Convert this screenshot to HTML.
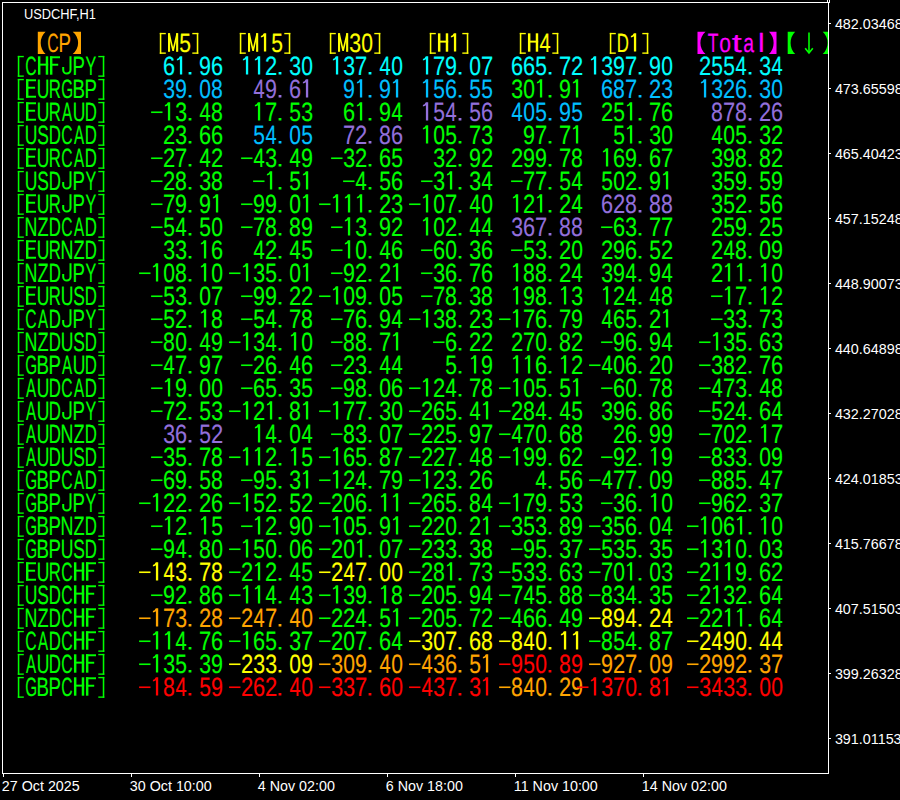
<!DOCTYPE html>
<html><head><meta charset="utf-8"><style>
html,body{margin:0;padding:0;background:#000;width:900px;height:800px;overflow:hidden}
svg{display:block}
text{font-family:"Liberation Sans",sans-serif;font-size:20px}
.tb text{stroke-width:0.12px;vector-effect:non-scaling-stroke}
.tb g:not(.ar)>rect,.tb g:not(.ar)>path:not(.sk){stroke:none}
.ax text{font-size:14px;fill:#fff}
</style></head><body>
<svg width="900" height="800" viewBox="0 0 900 800">
<rect width="900" height="800" fill="#000"/>
<defs><clipPath id="cl"><rect x="0" y="0" width="828" height="773"/></clipPath></defs>
<g clip-path="url(#cl)" class="tb">
<g fill="#FFA500">
<path d="M37.8 31.8H45.6A15.02 15.02 0 0 0 45.6 54H37.8Z"/>
</g>
<g fill="#FFA500" stroke="#FFA500">
<text transform="matrix(0.787 0 0.001 1.319 47.21 51.7)">C</text>
<text transform="matrix(0.935 0 0.001 1.319 58.5 51.7)">P</text>
</g>
<g fill="#FFA500">
<path d="M81 31.8H72.7A14.11 14.11 0 0 1 72.7 54H81Z"/>
</g>
<g fill="#FFFF00" stroke="#FFFF00">
<rect x="159.8" y="32.9" width="1.55" height="20.9"/>
<rect x="159.8" y="32.9" width="6" height="1.35"/>
<rect x="159.8" y="52.45" width="6" height="1.35"/>
<rect x="168" y="33.1" width="2.1" height="18.7"/>
<rect x="176.1" y="33.1" width="2.1" height="18.7"/>
<path class="sk" fill="none" stroke="#FFFF00" stroke-width="1.6" d="M169.1 33.6L173.1 50.7L177.1 33.6"/>
<text transform="matrix(1.053 0 0.001 1.319 179.16 51.7)">5</text>
<rect x="196.75" y="32.9" width="1.55" height="20.9"/>
<rect x="192.3" y="32.9" width="6" height="1.35"/>
<rect x="192.3" y="52.45" width="6" height="1.35"/>
</g>
<g fill="#FFFF00" stroke="#FFFF00">
<rect x="239.8" y="32.9" width="1.55" height="20.9"/>
<rect x="239.8" y="32.9" width="6" height="1.35"/>
<rect x="239.8" y="52.45" width="6" height="1.35"/>
<rect x="248" y="33.1" width="2.1" height="18.7"/>
<rect x="256.1" y="33.1" width="2.1" height="18.7"/>
<path class="sk" fill="none" stroke="#FFFF00" stroke-width="1.6" d="M249.1 33.6L253.1 50.7L257.1 33.6"/>
<path d="M263.9 33.3H266.2V51.5H263.9V36.3Q262.9 37.2 260.9 37.4V36Q262.6 35.8 263.9 33.3Z"/>
<text transform="matrix(1.053 0 0.001 1.319 271.16 51.7)">5</text>
<rect x="288.75" y="32.9" width="1.55" height="20.9"/>
<rect x="284.3" y="32.9" width="6" height="1.35"/>
<rect x="284.3" y="52.45" width="6" height="1.35"/>
</g>
<g fill="#FFFF00" stroke="#FFFF00">
<rect x="329.8" y="32.9" width="1.55" height="20.9"/>
<rect x="329.8" y="32.9" width="6" height="1.35"/>
<rect x="329.8" y="52.45" width="6" height="1.35"/>
<rect x="338" y="33.1" width="2.1" height="18.7"/>
<rect x="346.1" y="33.1" width="2.1" height="18.7"/>
<path class="sk" fill="none" stroke="#FFFF00" stroke-width="1.6" d="M339.1 33.6L343.1 50.7L347.1 33.6"/>
<text transform="matrix(1.064 0 0.001 1.319 349.15 51.7)">3</text>
<text transform="matrix(1.053 0 0.001 1.319 361.16 51.7)">0</text>
<rect x="378.75" y="32.9" width="1.55" height="20.9"/>
<rect x="374.3" y="32.9" width="6" height="1.35"/>
<rect x="374.3" y="52.45" width="6" height="1.35"/>
</g>
<g fill="#FFFF00" stroke="#FFFF00">
<rect x="429.8" y="32.9" width="1.55" height="20.9"/>
<rect x="429.8" y="32.9" width="6" height="1.35"/>
<rect x="429.8" y="52.45" width="6" height="1.35"/>
<rect x="437.95" y="33.3" width="2.45" height="18.4"/>
<rect x="445.75" y="33.3" width="2.45" height="18.4"/>
<rect x="438.05" y="40.65" width="10.1" height="1.95"/>
<path d="M453.9 33.3H456.2V51.5H453.9V36.3Q452.9 37.2 450.9 37.4V36Q452.6 35.8 453.9 33.3Z"/>
<rect x="466.75" y="32.9" width="1.55" height="20.9"/>
<rect x="462.3" y="32.9" width="6" height="1.35"/>
<rect x="462.3" y="52.45" width="6" height="1.35"/>
</g>
<g fill="#FFFF00" stroke="#FFFF00">
<rect x="519.8" y="32.9" width="1.55" height="20.9"/>
<rect x="519.8" y="32.9" width="6" height="1.35"/>
<rect x="519.8" y="52.45" width="6" height="1.35"/>
<rect x="527.95" y="33.3" width="2.45" height="18.4"/>
<rect x="535.75" y="33.3" width="2.45" height="18.4"/>
<rect x="528.05" y="40.65" width="10.1" height="1.95"/>
<text transform="matrix(1 0 0.001 1.319 539.5 51.7)">4</text>
<rect x="556.75" y="32.9" width="1.55" height="20.9"/>
<rect x="552.3" y="32.9" width="6" height="1.35"/>
<rect x="552.3" y="52.45" width="6" height="1.35"/>
</g>
<g fill="#FFFF00" stroke="#FFFF00">
<rect x="609.8" y="32.9" width="1.55" height="20.9"/>
<rect x="609.8" y="32.9" width="6" height="1.35"/>
<rect x="609.8" y="52.45" width="6" height="1.35"/>
<text transform="matrix(0.84 0 0.001 1.319 616.66 51.7)">D</text>
<path d="M633.9 33.3H636.2V51.5H633.9V36.3Q632.9 37.2 630.9 37.4V36Q632.6 35.8 633.9 33.3Z"/>
<rect x="646.75" y="32.9" width="1.55" height="20.9"/>
<rect x="642.3" y="32.9" width="6" height="1.35"/>
<rect x="642.3" y="52.45" width="6" height="1.35"/>
</g>
<g fill="#FF00FF">
<path d="M697.5 31.8H705.5A14.63 14.63 0 0 0 705.5 54H697.5Z"/>
<path d="M776.5 31.8H769A15.69 15.69 0 0 1 769 54H776.5Z"/>
</g>
<g fill="#FF00FF" stroke="#FF00FF">
<text transform="matrix(0.877 0 0.001 1.319 707.65 51.7)">T</text>
<text transform="matrix(1.053 0 0.001 1.319 719.16 51.7)">o</text>
<text transform="matrix(1.824 0 0.001 1.319 731.65 51.7)">t</text>
<text transform="matrix(0.971 0 0.001 1.319 743.22 51.7)">a</text>
<text transform="matrix(1.5 0 0.001 1.319 757.95 51.7)">l</text>
</g>
<g fill="#00FF00">
<path d="M787.7 31.8H795.2A15.69 15.69 0 0 0 795.2 54H787.7Z"/>
<path d="M830.5 31.8H822.7A15.02 15.02 0 0 1 822.7 54H830.5Z"/>
</g>
<g class="ar" stroke="#00FF00" stroke-width="1.6" fill="none"><path d="M809 32.5V53"/><path d="M805.2 48.2L809 53L812.8 48.2"/></g>
<g fill="#00FF00" stroke="#00FF00">
<rect x="17.8" y="55.9" width="1.55" height="20.9"/>
<rect x="17.8" y="55.9" width="6" height="1.35"/>
<rect x="17.8" y="75.45" width="6" height="1.35"/>
<text transform="matrix(0.787 0 0.001 1.319 25.21 74.7)">C</text>
<rect x="37.95" y="56.3" width="2.45" height="18.4"/>
<rect x="45.75" y="56.3" width="2.45" height="18.4"/>
<rect x="38.05" y="63.65" width="10.1" height="1.95"/>
<rect x="49.95" y="56.3" width="2.45" height="18.4"/>
<rect x="50" y="56.3" width="10" height="1.95"/>
<rect x="50" y="63.75" width="8.2" height="1.95"/>
<path class="sk" fill="none" stroke="#00FF00" stroke-width="2" d="M70.5 56.3V69.95A3.65 3.55 0 0 1 63.2 69.95V66.9"/>
<text transform="matrix(0.935 0 0.001 1.319 72.5 74.7)">P</text>
<text transform="matrix(0.806 0 0.001 1.319 85.6 74.7)">Y</text>
<rect x="102.75" y="55.9" width="1.55" height="20.9"/>
<rect x="98.3" y="55.9" width="6" height="1.35"/>
<rect x="98.3" y="75.45" width="6" height="1.35"/>
</g>
<g fill="#00FFFF" stroke="#00FFFF">
<text transform="matrix(1.087 0 0.001 1.319 162.91 74.7)">6</text>
<path d="M179.9 56.3H182.2V74.5H179.9V59.3Q178.9 60.2 176.9 60.4V59Q178.6 58.8 179.9 56.3Z"/>
<rect x="188.6" y="72" width="2.8" height="2.5"/>
<text transform="matrix(1.075 0 0.001 1.319 199.03 74.7)">9</text>
<text transform="matrix(1.087 0 0.001 1.319 210.91 74.7)">6</text>
</g>
<g fill="#00FFFF" stroke="#00FFFF">
<path d="M245.9 56.3H248.2V74.5H245.9V59.3Q244.9 60.2 242.9 60.4V59Q244.6 58.8 245.9 56.3Z"/>
<path d="M257.9 56.3H260.2V74.5H257.9V59.3Q256.9 60.2 254.9 60.4V59Q256.6 58.8 257.9 56.3Z"/>
<text transform="matrix(1.099 0 0.001 1.319 264.9 74.7)">2</text>
<rect x="278.6" y="72" width="2.8" height="2.5"/>
<text transform="matrix(1.064 0 0.001 1.319 289.15 74.7)">3</text>
<text transform="matrix(1.053 0 0.001 1.319 301.16 74.7)">0</text>
</g>
<g fill="#00FFFF" stroke="#00FFFF">
<path d="M335.9 56.3H338.2V74.5H335.9V59.3Q334.9 60.2 332.9 60.4V59Q334.6 58.8 335.9 56.3Z"/>
<text transform="matrix(1.064 0 0.001 1.319 343.15 74.7)">3</text>
<text transform="matrix(1.099 0 0.001 1.319 354.9 74.7)">7</text>
<rect x="368.6" y="72" width="2.8" height="2.5"/>
<text transform="matrix(1 0 0.001 1.319 379.5 74.7)">4</text>
<text transform="matrix(1.053 0 0.001 1.319 391.16 74.7)">0</text>
</g>
<g fill="#00FFFF" stroke="#00FFFF">
<path d="M425.9 56.3H428.2V74.5H425.9V59.3Q424.9 60.2 422.9 60.4V59Q424.6 58.8 425.9 56.3Z"/>
<text transform="matrix(1.099 0 0.001 1.319 432.9 74.7)">7</text>
<text transform="matrix(1.075 0 0.001 1.319 445.03 74.7)">9</text>
<rect x="458.6" y="72" width="2.8" height="2.5"/>
<text transform="matrix(1.053 0 0.001 1.319 469.16 74.7)">0</text>
<text transform="matrix(1.099 0 0.001 1.319 480.9 74.7)">7</text>
</g>
<g fill="#00FFFF" stroke="#00FFFF">
<text transform="matrix(1.087 0 0.001 1.319 510.91 74.7)">6</text>
<text transform="matrix(1.087 0 0.001 1.319 522.91 74.7)">6</text>
<text transform="matrix(1.053 0 0.001 1.319 535.16 74.7)">5</text>
<rect x="548.6" y="72" width="2.8" height="2.5"/>
<text transform="matrix(1.099 0 0.001 1.319 558.9 74.7)">7</text>
<text transform="matrix(1.099 0 0.001 1.319 570.9 74.7)">2</text>
</g>
<g fill="#00FFFF" stroke="#00FFFF">
<path d="M593.9 56.3H596.2V74.5H593.9V59.3Q592.9 60.2 590.9 60.4V59Q592.6 58.8 593.9 56.3Z"/>
<text transform="matrix(1.064 0 0.001 1.319 601.15 74.7)">3</text>
<text transform="matrix(1.075 0 0.001 1.319 613.03 74.7)">9</text>
<text transform="matrix(1.099 0 0.001 1.319 624.9 74.7)">7</text>
<rect x="638.6" y="72" width="2.8" height="2.5"/>
<text transform="matrix(1.075 0 0.001 1.319 649.03 74.7)">9</text>
<text transform="matrix(1.053 0 0.001 1.319 661.16 74.7)">0</text>
</g>
<g fill="#00FFFF" stroke="#00FFFF">
<text transform="matrix(1.099 0 0.001 1.319 698.9 74.7)">2</text>
<text transform="matrix(1.053 0 0.001 1.319 711.16 74.7)">5</text>
<text transform="matrix(1.053 0 0.001 1.319 723.16 74.7)">5</text>
<text transform="matrix(1 0 0.001 1.319 735.5 74.7)">4</text>
<rect x="748.6" y="72" width="2.8" height="2.5"/>
<text transform="matrix(1.064 0 0.001 1.319 759.15 74.7)">3</text>
<text transform="matrix(1 0 0.001 1.319 771.5 74.7)">4</text>
</g>
<g fill="#00FF00" stroke="#00FF00">
<rect x="17.8" y="78.9" width="1.55" height="20.9"/>
<rect x="17.8" y="78.9" width="6" height="1.35"/>
<rect x="17.8" y="98.45" width="6" height="1.35"/>
<rect x="26" y="79.3" width="2.4" height="18.4"/>
<rect x="26.1" y="79.3" width="9.9" height="1.95"/>
<rect x="26.1" y="86.75" width="9" height="1.95"/>
<rect x="26.1" y="95.75" width="9.9" height="1.95"/>
<text transform="matrix(0.877 0 0.001 1.319 36.68 97.7)">U</text>
<text transform="matrix(0.84 0 0.001 1.319 48.66 97.7)">R</text>
<text transform="matrix(0.763 0 0.001 1.319 61.24 97.7)">G</text>
<text transform="matrix(0.935 0 0.001 1.319 72.5 97.7)">B</text>
<text transform="matrix(0.935 0 0.001 1.319 84.5 97.7)">P</text>
<rect x="102.75" y="78.9" width="1.55" height="20.9"/>
<rect x="98.3" y="78.9" width="6" height="1.35"/>
<rect x="98.3" y="98.45" width="6" height="1.35"/>
</g>
<g fill="#00BFFF" stroke="#00BFFF">
<text transform="matrix(1.064 0 0.001 1.319 163.15 97.7)">3</text>
<text transform="matrix(1.075 0 0.001 1.319 175.03 97.7)">9</text>
<rect x="188.6" y="95" width="2.8" height="2.5"/>
<text transform="matrix(1.053 0 0.001 1.319 199.16 97.7)">0</text>
<text transform="matrix(1.064 0 0.001 1.319 211.04 97.7)">8</text>
</g>
<g fill="#9370DB" stroke="#9370DB">
<text transform="matrix(1 0 0.001 1.319 253.5 97.7)">4</text>
<text transform="matrix(1.075 0 0.001 1.319 265.03 97.7)">9</text>
<rect x="278.6" y="95" width="2.8" height="2.5"/>
<text transform="matrix(1.087 0 0.001 1.319 288.91 97.7)">6</text>
<path d="M305.9 79.3H308.2V97.5H305.9V82.3Q304.9 83.2 302.9 83.4V82Q304.6 81.8 305.9 79.3Z"/>
</g>
<g fill="#00BFFF" stroke="#00BFFF">
<text transform="matrix(1.075 0 0.001 1.319 343.03 97.7)">9</text>
<path d="M359.9 79.3H362.2V97.5H359.9V82.3Q358.9 83.2 356.9 83.4V82Q358.6 81.8 359.9 79.3Z"/>
<rect x="368.6" y="95" width="2.8" height="2.5"/>
<text transform="matrix(1.075 0 0.001 1.319 379.03 97.7)">9</text>
<path d="M395.9 79.3H398.2V97.5H395.9V82.3Q394.9 83.2 392.9 83.4V82Q394.6 81.8 395.9 79.3Z"/>
</g>
<g fill="#00BFFF" stroke="#00BFFF">
<path d="M425.9 79.3H428.2V97.5H425.9V82.3Q424.9 83.2 422.9 83.4V82Q424.6 81.8 425.9 79.3Z"/>
<text transform="matrix(1.053 0 0.001 1.319 433.16 97.7)">5</text>
<text transform="matrix(1.087 0 0.001 1.319 444.91 97.7)">6</text>
<rect x="458.6" y="95" width="2.8" height="2.5"/>
<text transform="matrix(1.053 0 0.001 1.319 469.16 97.7)">5</text>
<text transform="matrix(1.053 0 0.001 1.319 481.16 97.7)">5</text>
</g>
<g fill="#00FF00" stroke="#00FF00">
<text transform="matrix(1.064 0 0.001 1.319 511.15 97.7)">3</text>
<text transform="matrix(1.053 0 0.001 1.319 523.16 97.7)">0</text>
<path d="M539.9 79.3H542.2V97.5H539.9V82.3Q538.9 83.2 536.9 83.4V82Q538.6 81.8 539.9 79.3Z"/>
<rect x="548.6" y="95" width="2.8" height="2.5"/>
<text transform="matrix(1.075 0 0.001 1.319 559.03 97.7)">9</text>
<path d="M575.9 79.3H578.2V97.5H575.9V82.3Q574.9 83.2 572.9 83.4V82Q574.6 81.8 575.9 79.3Z"/>
</g>
<g fill="#00BFFF" stroke="#00BFFF">
<text transform="matrix(1.087 0 0.001 1.319 600.91 97.7)">6</text>
<text transform="matrix(1.064 0 0.001 1.319 613.04 97.7)">8</text>
<text transform="matrix(1.099 0 0.001 1.319 624.9 97.7)">7</text>
<rect x="638.6" y="95" width="2.8" height="2.5"/>
<text transform="matrix(1.099 0 0.001 1.319 648.9 97.7)">2</text>
<text transform="matrix(1.064 0 0.001 1.319 661.15 97.7)">3</text>
</g>
<g fill="#00BFFF" stroke="#00BFFF">
<path d="M703.9 79.3H706.2V97.5H703.9V82.3Q702.9 83.2 700.9 83.4V82Q702.6 81.8 703.9 79.3Z"/>
<text transform="matrix(1.064 0 0.001 1.319 711.15 97.7)">3</text>
<text transform="matrix(1.099 0 0.001 1.319 722.9 97.7)">2</text>
<text transform="matrix(1.087 0 0.001 1.319 734.91 97.7)">6</text>
<rect x="748.6" y="95" width="2.8" height="2.5"/>
<text transform="matrix(1.064 0 0.001 1.319 759.15 97.7)">3</text>
<text transform="matrix(1.053 0 0.001 1.319 771.16 97.7)">0</text>
</g>
<g fill="#00FF00" stroke="#00FF00">
<rect x="17.8" y="101.9" width="1.55" height="20.9"/>
<rect x="17.8" y="101.9" width="6" height="1.35"/>
<rect x="17.8" y="121.45" width="6" height="1.35"/>
<rect x="26" y="102.3" width="2.4" height="18.4"/>
<rect x="26.1" y="102.3" width="9.9" height="1.95"/>
<rect x="26.1" y="109.75" width="9" height="1.95"/>
<rect x="26.1" y="118.75" width="9.9" height="1.95"/>
<text transform="matrix(0.877 0 0.001 1.319 36.68 120.7)">U</text>
<text transform="matrix(0.84 0 0.001 1.319 48.66 120.7)">R</text>
<text transform="matrix(0.758 0 0.001 1.319 61.92 120.7)">A</text>
<text transform="matrix(0.877 0 0.001 1.319 72.68 120.7)">U</text>
<text transform="matrix(0.84 0 0.001 1.319 84.66 120.7)">D</text>
<rect x="102.75" y="101.9" width="1.55" height="20.9"/>
<rect x="98.3" y="101.9" width="6" height="1.35"/>
<rect x="98.3" y="121.45" width="6" height="1.35"/>
</g>
<g fill="#00FF00" stroke="#00FF00">
<rect x="151.1" y="111.45" width="11.4" height="1.6"/>
<path d="M167.9 102.3H170.2V120.5H167.9V105.3Q166.9 106.2 164.9 106.4V105Q166.6 104.8 167.9 102.3Z"/>
<text transform="matrix(1.064 0 0.001 1.319 175.15 120.7)">3</text>
<rect x="188.6" y="118" width="2.8" height="2.5"/>
<text transform="matrix(1 0 0.001 1.319 199.5 120.7)">4</text>
<text transform="matrix(1.064 0 0.001 1.319 211.04 120.7)">8</text>
</g>
<g fill="#00FF00" stroke="#00FF00">
<path d="M257.9 102.3H260.2V120.5H257.9V105.3Q256.9 106.2 254.9 106.4V105Q256.6 104.8 257.9 102.3Z"/>
<text transform="matrix(1.099 0 0.001 1.319 264.9 120.7)">7</text>
<rect x="278.6" y="118" width="2.8" height="2.5"/>
<text transform="matrix(1.053 0 0.001 1.319 289.16 120.7)">5</text>
<text transform="matrix(1.064 0 0.001 1.319 301.15 120.7)">3</text>
</g>
<g fill="#00FF00" stroke="#00FF00">
<text transform="matrix(1.087 0 0.001 1.319 342.91 120.7)">6</text>
<path d="M359.9 102.3H362.2V120.5H359.9V105.3Q358.9 106.2 356.9 106.4V105Q358.6 104.8 359.9 102.3Z"/>
<rect x="368.6" y="118" width="2.8" height="2.5"/>
<text transform="matrix(1.075 0 0.001 1.319 379.03 120.7)">9</text>
<text transform="matrix(1 0 0.001 1.319 391.5 120.7)">4</text>
</g>
<g fill="#9370DB" stroke="#9370DB">
<path d="M425.9 102.3H428.2V120.5H425.9V105.3Q424.9 106.2 422.9 106.4V105Q424.6 104.8 425.9 102.3Z"/>
<text transform="matrix(1.053 0 0.001 1.319 433.16 120.7)">5</text>
<text transform="matrix(1 0 0.001 1.319 445.5 120.7)">4</text>
<rect x="458.6" y="118" width="2.8" height="2.5"/>
<text transform="matrix(1.053 0 0.001 1.319 469.16 120.7)">5</text>
<text transform="matrix(1.087 0 0.001 1.319 480.91 120.7)">6</text>
</g>
<g fill="#00BFFF" stroke="#00BFFF">
<text transform="matrix(1 0 0.001 1.319 511.5 120.7)">4</text>
<text transform="matrix(1.053 0 0.001 1.319 523.16 120.7)">0</text>
<text transform="matrix(1.053 0 0.001 1.319 535.16 120.7)">5</text>
<rect x="548.6" y="118" width="2.8" height="2.5"/>
<text transform="matrix(1.075 0 0.001 1.319 559.03 120.7)">9</text>
<text transform="matrix(1.053 0 0.001 1.319 571.16 120.7)">5</text>
</g>
<g fill="#00FF00" stroke="#00FF00">
<text transform="matrix(1.099 0 0.001 1.319 600.9 120.7)">2</text>
<text transform="matrix(1.053 0 0.001 1.319 613.16 120.7)">5</text>
<path d="M629.9 102.3H632.2V120.5H629.9V105.3Q628.9 106.2 626.9 106.4V105Q628.6 104.8 629.9 102.3Z"/>
<rect x="638.6" y="118" width="2.8" height="2.5"/>
<text transform="matrix(1.099 0 0.001 1.319 648.9 120.7)">7</text>
<text transform="matrix(1.087 0 0.001 1.319 660.91 120.7)">6</text>
</g>
<g fill="#9370DB" stroke="#9370DB">
<text transform="matrix(1.064 0 0.001 1.319 711.04 120.7)">8</text>
<text transform="matrix(1.099 0 0.001 1.319 722.9 120.7)">7</text>
<text transform="matrix(1.064 0 0.001 1.319 735.04 120.7)">8</text>
<rect x="748.6" y="118" width="2.8" height="2.5"/>
<text transform="matrix(1.099 0 0.001 1.319 758.9 120.7)">2</text>
<text transform="matrix(1.087 0 0.001 1.319 770.91 120.7)">6</text>
</g>
<g fill="#00FF00" stroke="#00FF00">
<rect x="17.8" y="124.9" width="1.55" height="20.9"/>
<rect x="17.8" y="124.9" width="6" height="1.35"/>
<rect x="17.8" y="144.45" width="6" height="1.35"/>
<text transform="matrix(0.877 0 0.001 1.319 24.68 143.7)">U</text>
<text transform="matrix(0.87 0 0.001 1.319 37.22 143.7)">S</text>
<text transform="matrix(0.84 0 0.001 1.319 48.66 143.7)">D</text>
<text transform="matrix(0.787 0 0.001 1.319 61.21 143.7)">C</text>
<text transform="matrix(0.758 0 0.001 1.319 73.92 143.7)">A</text>
<text transform="matrix(0.84 0 0.001 1.319 84.66 143.7)">D</text>
<rect x="102.75" y="124.9" width="1.55" height="20.9"/>
<rect x="98.3" y="124.9" width="6" height="1.35"/>
<rect x="98.3" y="144.45" width="6" height="1.35"/>
</g>
<g fill="#00FF00" stroke="#00FF00">
<text transform="matrix(1.099 0 0.001 1.319 162.9 143.7)">2</text>
<text transform="matrix(1.064 0 0.001 1.319 175.15 143.7)">3</text>
<rect x="188.6" y="141" width="2.8" height="2.5"/>
<text transform="matrix(1.087 0 0.001 1.319 198.91 143.7)">6</text>
<text transform="matrix(1.087 0 0.001 1.319 210.91 143.7)">6</text>
</g>
<g fill="#00BFFF" stroke="#00BFFF">
<text transform="matrix(1.053 0 0.001 1.319 253.16 143.7)">5</text>
<text transform="matrix(1 0 0.001 1.319 265.5 143.7)">4</text>
<rect x="278.6" y="141" width="2.8" height="2.5"/>
<text transform="matrix(1.053 0 0.001 1.319 289.16 143.7)">0</text>
<text transform="matrix(1.053 0 0.001 1.319 301.16 143.7)">5</text>
</g>
<g fill="#9370DB" stroke="#9370DB">
<text transform="matrix(1.099 0 0.001 1.319 342.9 143.7)">7</text>
<text transform="matrix(1.099 0 0.001 1.319 354.9 143.7)">2</text>
<rect x="368.6" y="141" width="2.8" height="2.5"/>
<text transform="matrix(1.064 0 0.001 1.319 379.04 143.7)">8</text>
<text transform="matrix(1.087 0 0.001 1.319 390.91 143.7)">6</text>
</g>
<g fill="#00FF00" stroke="#00FF00">
<path d="M425.9 125.3H428.2V143.5H425.9V128.3Q424.9 129.2 422.9 129.4V128Q424.6 127.8 425.9 125.3Z"/>
<text transform="matrix(1.053 0 0.001 1.319 433.16 143.7)">0</text>
<text transform="matrix(1.053 0 0.001 1.319 445.16 143.7)">5</text>
<rect x="458.6" y="141" width="2.8" height="2.5"/>
<text transform="matrix(1.099 0 0.001 1.319 468.9 143.7)">7</text>
<text transform="matrix(1.064 0 0.001 1.319 481.15 143.7)">3</text>
</g>
<g fill="#00FF00" stroke="#00FF00">
<text transform="matrix(1.075 0 0.001 1.319 523.03 143.7)">9</text>
<text transform="matrix(1.099 0 0.001 1.319 534.9 143.7)">7</text>
<rect x="548.6" y="141" width="2.8" height="2.5"/>
<text transform="matrix(1.099 0 0.001 1.319 558.9 143.7)">7</text>
<path d="M575.9 125.3H578.2V143.5H575.9V128.3Q574.9 129.2 572.9 129.4V128Q574.6 127.8 575.9 125.3Z"/>
</g>
<g fill="#00FF00" stroke="#00FF00">
<text transform="matrix(1.053 0 0.001 1.319 613.16 143.7)">5</text>
<path d="M629.9 125.3H632.2V143.5H629.9V128.3Q628.9 129.2 626.9 129.4V128Q628.6 127.8 629.9 125.3Z"/>
<rect x="638.6" y="141" width="2.8" height="2.5"/>
<text transform="matrix(1.064 0 0.001 1.319 649.15 143.7)">3</text>
<text transform="matrix(1.053 0 0.001 1.319 661.16 143.7)">0</text>
</g>
<g fill="#00FF00" stroke="#00FF00">
<text transform="matrix(1 0 0.001 1.319 711.5 143.7)">4</text>
<text transform="matrix(1.053 0 0.001 1.319 723.16 143.7)">0</text>
<text transform="matrix(1.053 0 0.001 1.319 735.16 143.7)">5</text>
<rect x="748.6" y="141" width="2.8" height="2.5"/>
<text transform="matrix(1.064 0 0.001 1.319 759.15 143.7)">3</text>
<text transform="matrix(1.099 0 0.001 1.319 770.9 143.7)">2</text>
</g>
<g fill="#00FF00" stroke="#00FF00">
<rect x="17.8" y="147.9" width="1.55" height="20.9"/>
<rect x="17.8" y="147.9" width="6" height="1.35"/>
<rect x="17.8" y="167.45" width="6" height="1.35"/>
<rect x="26" y="148.3" width="2.4" height="18.4"/>
<rect x="26.1" y="148.3" width="9.9" height="1.95"/>
<rect x="26.1" y="155.75" width="9" height="1.95"/>
<rect x="26.1" y="164.75" width="9.9" height="1.95"/>
<text transform="matrix(0.877 0 0.001 1.319 36.68 166.7)">U</text>
<text transform="matrix(0.84 0 0.001 1.319 48.66 166.7)">R</text>
<text transform="matrix(0.787 0 0.001 1.319 61.21 166.7)">C</text>
<text transform="matrix(0.758 0 0.001 1.319 73.92 166.7)">A</text>
<text transform="matrix(0.84 0 0.001 1.319 84.66 166.7)">D</text>
<rect x="102.75" y="147.9" width="1.55" height="20.9"/>
<rect x="98.3" y="147.9" width="6" height="1.35"/>
<rect x="98.3" y="167.45" width="6" height="1.35"/>
</g>
<g fill="#00FF00" stroke="#00FF00">
<rect x="151.1" y="157.45" width="11.4" height="1.6"/>
<text transform="matrix(1.099 0 0.001 1.319 162.9 166.7)">2</text>
<text transform="matrix(1.099 0 0.001 1.319 174.9 166.7)">7</text>
<rect x="188.6" y="164" width="2.8" height="2.5"/>
<text transform="matrix(1 0 0.001 1.319 199.5 166.7)">4</text>
<text transform="matrix(1.099 0 0.001 1.319 210.9 166.7)">2</text>
</g>
<g fill="#00FF00" stroke="#00FF00">
<rect x="241.1" y="157.45" width="11.4" height="1.6"/>
<text transform="matrix(1 0 0.001 1.319 253.5 166.7)">4</text>
<text transform="matrix(1.064 0 0.001 1.319 265.15 166.7)">3</text>
<rect x="278.6" y="164" width="2.8" height="2.5"/>
<text transform="matrix(1 0 0.001 1.319 289.5 166.7)">4</text>
<text transform="matrix(1.075 0 0.001 1.319 301.03 166.7)">9</text>
</g>
<g fill="#00FF00" stroke="#00FF00">
<rect x="331.1" y="157.45" width="11.4" height="1.6"/>
<text transform="matrix(1.064 0 0.001 1.319 343.15 166.7)">3</text>
<text transform="matrix(1.099 0 0.001 1.319 354.9 166.7)">2</text>
<rect x="368.6" y="164" width="2.8" height="2.5"/>
<text transform="matrix(1.087 0 0.001 1.319 378.91 166.7)">6</text>
<text transform="matrix(1.053 0 0.001 1.319 391.16 166.7)">5</text>
</g>
<g fill="#00FF00" stroke="#00FF00">
<text transform="matrix(1.064 0 0.001 1.319 433.15 166.7)">3</text>
<text transform="matrix(1.099 0 0.001 1.319 444.9 166.7)">2</text>
<rect x="458.6" y="164" width="2.8" height="2.5"/>
<text transform="matrix(1.075 0 0.001 1.319 469.03 166.7)">9</text>
<text transform="matrix(1.099 0 0.001 1.319 480.9 166.7)">2</text>
</g>
<g fill="#00FF00" stroke="#00FF00">
<text transform="matrix(1.099 0 0.001 1.319 510.9 166.7)">2</text>
<text transform="matrix(1.075 0 0.001 1.319 523.03 166.7)">9</text>
<text transform="matrix(1.075 0 0.001 1.319 535.03 166.7)">9</text>
<rect x="548.6" y="164" width="2.8" height="2.5"/>
<text transform="matrix(1.099 0 0.001 1.319 558.9 166.7)">7</text>
<text transform="matrix(1.064 0 0.001 1.319 571.04 166.7)">8</text>
</g>
<g fill="#00FF00" stroke="#00FF00">
<path d="M605.9 148.3H608.2V166.5H605.9V151.3Q604.9 152.2 602.9 152.4V151Q604.6 150.8 605.9 148.3Z"/>
<text transform="matrix(1.087 0 0.001 1.319 612.91 166.7)">6</text>
<text transform="matrix(1.075 0 0.001 1.319 625.03 166.7)">9</text>
<rect x="638.6" y="164" width="2.8" height="2.5"/>
<text transform="matrix(1.087 0 0.001 1.319 648.91 166.7)">6</text>
<text transform="matrix(1.099 0 0.001 1.319 660.9 166.7)">7</text>
</g>
<g fill="#00FF00" stroke="#00FF00">
<text transform="matrix(1.064 0 0.001 1.319 711.15 166.7)">3</text>
<text transform="matrix(1.075 0 0.001 1.319 723.03 166.7)">9</text>
<text transform="matrix(1.064 0 0.001 1.319 735.04 166.7)">8</text>
<rect x="748.6" y="164" width="2.8" height="2.5"/>
<text transform="matrix(1.064 0 0.001 1.319 759.04 166.7)">8</text>
<text transform="matrix(1.099 0 0.001 1.319 770.9 166.7)">2</text>
</g>
<g fill="#00FF00" stroke="#00FF00">
<rect x="17.8" y="170.9" width="1.55" height="20.9"/>
<rect x="17.8" y="170.9" width="6" height="1.35"/>
<rect x="17.8" y="190.45" width="6" height="1.35"/>
<text transform="matrix(0.877 0 0.001 1.319 24.68 189.7)">U</text>
<text transform="matrix(0.87 0 0.001 1.319 37.22 189.7)">S</text>
<text transform="matrix(0.84 0 0.001 1.319 48.66 189.7)">D</text>
<path class="sk" fill="none" stroke="#00FF00" stroke-width="2" d="M70.5 171.3V184.95A3.65 3.55 0 0 1 63.2 184.95V181.9"/>
<text transform="matrix(0.935 0 0.001 1.319 72.5 189.7)">P</text>
<text transform="matrix(0.806 0 0.001 1.319 85.6 189.7)">Y</text>
<rect x="102.75" y="170.9" width="1.55" height="20.9"/>
<rect x="98.3" y="170.9" width="6" height="1.35"/>
<rect x="98.3" y="190.45" width="6" height="1.35"/>
</g>
<g fill="#00FF00" stroke="#00FF00">
<rect x="151.1" y="180.45" width="11.4" height="1.6"/>
<text transform="matrix(1.099 0 0.001 1.319 162.9 189.7)">2</text>
<text transform="matrix(1.064 0 0.001 1.319 175.04 189.7)">8</text>
<rect x="188.6" y="187" width="2.8" height="2.5"/>
<text transform="matrix(1.064 0 0.001 1.319 199.15 189.7)">3</text>
<text transform="matrix(1.064 0 0.001 1.319 211.04 189.7)">8</text>
</g>
<g fill="#00FF00" stroke="#00FF00">
<rect x="253.1" y="180.45" width="11.4" height="1.6"/>
<path d="M269.9 171.3H272.2V189.5H269.9V174.3Q268.9 175.2 266.9 175.4V174Q268.6 173.8 269.9 171.3Z"/>
<rect x="278.6" y="187" width="2.8" height="2.5"/>
<text transform="matrix(1.053 0 0.001 1.319 289.16 189.7)">5</text>
<path d="M305.9 171.3H308.2V189.5H305.9V174.3Q304.9 175.2 302.9 175.4V174Q304.6 173.8 305.9 171.3Z"/>
</g>
<g fill="#00FF00" stroke="#00FF00">
<rect x="343.1" y="180.45" width="11.4" height="1.6"/>
<text transform="matrix(1 0 0.001 1.319 355.5 189.7)">4</text>
<rect x="368.6" y="187" width="2.8" height="2.5"/>
<text transform="matrix(1.053 0 0.001 1.319 379.16 189.7)">5</text>
<text transform="matrix(1.087 0 0.001 1.319 390.91 189.7)">6</text>
</g>
<g fill="#00FF00" stroke="#00FF00">
<rect x="421.1" y="180.45" width="11.4" height="1.6"/>
<text transform="matrix(1.064 0 0.001 1.319 433.15 189.7)">3</text>
<path d="M449.9 171.3H452.2V189.5H449.9V174.3Q448.9 175.2 446.9 175.4V174Q448.6 173.8 449.9 171.3Z"/>
<rect x="458.6" y="187" width="2.8" height="2.5"/>
<text transform="matrix(1.064 0 0.001 1.319 469.15 189.7)">3</text>
<text transform="matrix(1 0 0.001 1.319 481.5 189.7)">4</text>
</g>
<g fill="#00FF00" stroke="#00FF00">
<rect x="511.1" y="180.45" width="11.4" height="1.6"/>
<text transform="matrix(1.099 0 0.001 1.319 522.9 189.7)">7</text>
<text transform="matrix(1.099 0 0.001 1.319 534.9 189.7)">7</text>
<rect x="548.6" y="187" width="2.8" height="2.5"/>
<text transform="matrix(1.053 0 0.001 1.319 559.16 189.7)">5</text>
<text transform="matrix(1 0 0.001 1.319 571.5 189.7)">4</text>
</g>
<g fill="#00FF00" stroke="#00FF00">
<text transform="matrix(1.053 0 0.001 1.319 601.16 189.7)">5</text>
<text transform="matrix(1.053 0 0.001 1.319 613.16 189.7)">0</text>
<text transform="matrix(1.099 0 0.001 1.319 624.9 189.7)">2</text>
<rect x="638.6" y="187" width="2.8" height="2.5"/>
<text transform="matrix(1.075 0 0.001 1.319 649.03 189.7)">9</text>
<path d="M665.9 171.3H668.2V189.5H665.9V174.3Q664.9 175.2 662.9 175.4V174Q664.6 173.8 665.9 171.3Z"/>
</g>
<g fill="#00FF00" stroke="#00FF00">
<text transform="matrix(1.064 0 0.001 1.319 711.15 189.7)">3</text>
<text transform="matrix(1.053 0 0.001 1.319 723.16 189.7)">5</text>
<text transform="matrix(1.075 0 0.001 1.319 735.03 189.7)">9</text>
<rect x="748.6" y="187" width="2.8" height="2.5"/>
<text transform="matrix(1.053 0 0.001 1.319 759.16 189.7)">5</text>
<text transform="matrix(1.075 0 0.001 1.319 771.03 189.7)">9</text>
</g>
<g fill="#00FF00" stroke="#00FF00">
<rect x="17.8" y="193.9" width="1.55" height="20.9"/>
<rect x="17.8" y="193.9" width="6" height="1.35"/>
<rect x="17.8" y="213.45" width="6" height="1.35"/>
<rect x="26" y="194.3" width="2.4" height="18.4"/>
<rect x="26.1" y="194.3" width="9.9" height="1.95"/>
<rect x="26.1" y="201.75" width="9" height="1.95"/>
<rect x="26.1" y="210.75" width="9.9" height="1.95"/>
<text transform="matrix(0.877 0 0.001 1.319 36.68 212.7)">U</text>
<text transform="matrix(0.84 0 0.001 1.319 48.66 212.7)">R</text>
<path class="sk" fill="none" stroke="#00FF00" stroke-width="2" d="M70.5 194.3V207.95A3.65 3.55 0 0 1 63.2 207.95V204.9"/>
<text transform="matrix(0.935 0 0.001 1.319 72.5 212.7)">P</text>
<text transform="matrix(0.806 0 0.001 1.319 85.6 212.7)">Y</text>
<rect x="102.75" y="193.9" width="1.55" height="20.9"/>
<rect x="98.3" y="193.9" width="6" height="1.35"/>
<rect x="98.3" y="213.45" width="6" height="1.35"/>
</g>
<g fill="#00FF00" stroke="#00FF00">
<rect x="151.1" y="203.45" width="11.4" height="1.6"/>
<text transform="matrix(1.099 0 0.001 1.319 162.9 212.7)">7</text>
<text transform="matrix(1.075 0 0.001 1.319 175.03 212.7)">9</text>
<rect x="188.6" y="210" width="2.8" height="2.5"/>
<text transform="matrix(1.075 0 0.001 1.319 199.03 212.7)">9</text>
<path d="M215.9 194.3H218.2V212.5H215.9V197.3Q214.9 198.2 212.9 198.4V197Q214.6 196.8 215.9 194.3Z"/>
</g>
<g fill="#00FF00" stroke="#00FF00">
<rect x="241.1" y="203.45" width="11.4" height="1.6"/>
<text transform="matrix(1.075 0 0.001 1.319 253.03 212.7)">9</text>
<text transform="matrix(1.075 0 0.001 1.319 265.03 212.7)">9</text>
<rect x="278.6" y="210" width="2.8" height="2.5"/>
<text transform="matrix(1.053 0 0.001 1.319 289.16 212.7)">0</text>
<path d="M305.9 194.3H308.2V212.5H305.9V197.3Q304.9 198.2 302.9 198.4V197Q304.6 196.8 305.9 194.3Z"/>
</g>
<g fill="#00FF00" stroke="#00FF00">
<rect x="319.1" y="203.45" width="11.4" height="1.6"/>
<path d="M335.9 194.3H338.2V212.5H335.9V197.3Q334.9 198.2 332.9 198.4V197Q334.6 196.8 335.9 194.3Z"/>
<path d="M347.9 194.3H350.2V212.5H347.9V197.3Q346.9 198.2 344.9 198.4V197Q346.6 196.8 347.9 194.3Z"/>
<path d="M359.9 194.3H362.2V212.5H359.9V197.3Q358.9 198.2 356.9 198.4V197Q358.6 196.8 359.9 194.3Z"/>
<rect x="368.6" y="210" width="2.8" height="2.5"/>
<text transform="matrix(1.099 0 0.001 1.319 378.9 212.7)">2</text>
<text transform="matrix(1.064 0 0.001 1.319 391.15 212.7)">3</text>
</g>
<g fill="#00FF00" stroke="#00FF00">
<rect x="409.1" y="203.45" width="11.4" height="1.6"/>
<path d="M425.9 194.3H428.2V212.5H425.9V197.3Q424.9 198.2 422.9 198.4V197Q424.6 196.8 425.9 194.3Z"/>
<text transform="matrix(1.053 0 0.001 1.319 433.16 212.7)">0</text>
<text transform="matrix(1.099 0 0.001 1.319 444.9 212.7)">7</text>
<rect x="458.6" y="210" width="2.8" height="2.5"/>
<text transform="matrix(1 0 0.001 1.319 469.5 212.7)">4</text>
<text transform="matrix(1.053 0 0.001 1.319 481.16 212.7)">0</text>
</g>
<g fill="#00FF00" stroke="#00FF00">
<path d="M515.9 194.3H518.2V212.5H515.9V197.3Q514.9 198.2 512.9 198.4V197Q514.6 196.8 515.9 194.3Z"/>
<text transform="matrix(1.099 0 0.001 1.319 522.9 212.7)">2</text>
<path d="M539.9 194.3H542.2V212.5H539.9V197.3Q538.9 198.2 536.9 198.4V197Q538.6 196.8 539.9 194.3Z"/>
<rect x="548.6" y="210" width="2.8" height="2.5"/>
<text transform="matrix(1.099 0 0.001 1.319 558.9 212.7)">2</text>
<text transform="matrix(1 0 0.001 1.319 571.5 212.7)">4</text>
</g>
<g fill="#9370DB" stroke="#9370DB">
<text transform="matrix(1.087 0 0.001 1.319 600.91 212.7)">6</text>
<text transform="matrix(1.099 0 0.001 1.319 612.9 212.7)">2</text>
<text transform="matrix(1.064 0 0.001 1.319 625.04 212.7)">8</text>
<rect x="638.6" y="210" width="2.8" height="2.5"/>
<text transform="matrix(1.064 0 0.001 1.319 649.04 212.7)">8</text>
<text transform="matrix(1.064 0 0.001 1.319 661.04 212.7)">8</text>
</g>
<g fill="#00FF00" stroke="#00FF00">
<text transform="matrix(1.064 0 0.001 1.319 711.15 212.7)">3</text>
<text transform="matrix(1.053 0 0.001 1.319 723.16 212.7)">5</text>
<text transform="matrix(1.099 0 0.001 1.319 734.9 212.7)">2</text>
<rect x="748.6" y="210" width="2.8" height="2.5"/>
<text transform="matrix(1.053 0 0.001 1.319 759.16 212.7)">5</text>
<text transform="matrix(1.087 0 0.001 1.319 770.91 212.7)">6</text>
</g>
<g fill="#00FF00" stroke="#00FF00">
<rect x="17.8" y="216.9" width="1.55" height="20.9"/>
<rect x="17.8" y="216.9" width="6" height="1.35"/>
<rect x="17.8" y="236.45" width="6" height="1.35"/>
<text transform="matrix(0.893 0 0.001 1.319 24.57 235.7)">N</text>
<text transform="matrix(0.909 0 0.001 1.319 37.45 235.7)">Z</text>
<text transform="matrix(0.84 0 0.001 1.319 48.66 235.7)">D</text>
<text transform="matrix(0.787 0 0.001 1.319 61.21 235.7)">C</text>
<text transform="matrix(0.758 0 0.001 1.319 73.92 235.7)">A</text>
<text transform="matrix(0.84 0 0.001 1.319 84.66 235.7)">D</text>
<rect x="102.75" y="216.9" width="1.55" height="20.9"/>
<rect x="98.3" y="216.9" width="6" height="1.35"/>
<rect x="98.3" y="236.45" width="6" height="1.35"/>
</g>
<g fill="#00FF00" stroke="#00FF00">
<rect x="151.1" y="226.45" width="11.4" height="1.6"/>
<text transform="matrix(1.053 0 0.001 1.319 163.16 235.7)">5</text>
<text transform="matrix(1 0 0.001 1.319 175.5 235.7)">4</text>
<rect x="188.6" y="233" width="2.8" height="2.5"/>
<text transform="matrix(1.053 0 0.001 1.319 199.16 235.7)">5</text>
<text transform="matrix(1.053 0 0.001 1.319 211.16 235.7)">0</text>
</g>
<g fill="#00FF00" stroke="#00FF00">
<rect x="241.1" y="226.45" width="11.4" height="1.6"/>
<text transform="matrix(1.099 0 0.001 1.319 252.9 235.7)">7</text>
<text transform="matrix(1.064 0 0.001 1.319 265.04 235.7)">8</text>
<rect x="278.6" y="233" width="2.8" height="2.5"/>
<text transform="matrix(1.064 0 0.001 1.319 289.04 235.7)">8</text>
<text transform="matrix(1.075 0 0.001 1.319 301.03 235.7)">9</text>
</g>
<g fill="#00FF00" stroke="#00FF00">
<rect x="331.1" y="226.45" width="11.4" height="1.6"/>
<path d="M347.9 217.3H350.2V235.5H347.9V220.3Q346.9 221.2 344.9 221.4V220Q346.6 219.8 347.9 217.3Z"/>
<text transform="matrix(1.064 0 0.001 1.319 355.15 235.7)">3</text>
<rect x="368.6" y="233" width="2.8" height="2.5"/>
<text transform="matrix(1.075 0 0.001 1.319 379.03 235.7)">9</text>
<text transform="matrix(1.099 0 0.001 1.319 390.9 235.7)">2</text>
</g>
<g fill="#00FF00" stroke="#00FF00">
<path d="M425.9 217.3H428.2V235.5H425.9V220.3Q424.9 221.2 422.9 221.4V220Q424.6 219.8 425.9 217.3Z"/>
<text transform="matrix(1.053 0 0.001 1.319 433.16 235.7)">0</text>
<text transform="matrix(1.099 0 0.001 1.319 444.9 235.7)">2</text>
<rect x="458.6" y="233" width="2.8" height="2.5"/>
<text transform="matrix(1 0 0.001 1.319 469.5 235.7)">4</text>
<text transform="matrix(1 0 0.001 1.319 481.5 235.7)">4</text>
</g>
<g fill="#9370DB" stroke="#9370DB">
<text transform="matrix(1.064 0 0.001 1.319 511.15 235.7)">3</text>
<text transform="matrix(1.087 0 0.001 1.319 522.91 235.7)">6</text>
<text transform="matrix(1.099 0 0.001 1.319 534.9 235.7)">7</text>
<rect x="548.6" y="233" width="2.8" height="2.5"/>
<text transform="matrix(1.064 0 0.001 1.319 559.04 235.7)">8</text>
<text transform="matrix(1.064 0 0.001 1.319 571.04 235.7)">8</text>
</g>
<g fill="#00FF00" stroke="#00FF00">
<rect x="601.1" y="226.45" width="11.4" height="1.6"/>
<text transform="matrix(1.087 0 0.001 1.319 612.91 235.7)">6</text>
<text transform="matrix(1.064 0 0.001 1.319 625.15 235.7)">3</text>
<rect x="638.6" y="233" width="2.8" height="2.5"/>
<text transform="matrix(1.099 0 0.001 1.319 648.9 235.7)">7</text>
<text transform="matrix(1.099 0 0.001 1.319 660.9 235.7)">7</text>
</g>
<g fill="#00FF00" stroke="#00FF00">
<text transform="matrix(1.099 0 0.001 1.319 710.9 235.7)">2</text>
<text transform="matrix(1.053 0 0.001 1.319 723.16 235.7)">5</text>
<text transform="matrix(1.075 0 0.001 1.319 735.03 235.7)">9</text>
<rect x="748.6" y="233" width="2.8" height="2.5"/>
<text transform="matrix(1.099 0 0.001 1.319 758.9 235.7)">2</text>
<text transform="matrix(1.053 0 0.001 1.319 771.16 235.7)">5</text>
</g>
<g fill="#00FF00" stroke="#00FF00">
<rect x="17.8" y="239.9" width="1.55" height="20.9"/>
<rect x="17.8" y="239.9" width="6" height="1.35"/>
<rect x="17.8" y="259.45" width="6" height="1.35"/>
<rect x="26" y="240.3" width="2.4" height="18.4"/>
<rect x="26.1" y="240.3" width="9.9" height="1.95"/>
<rect x="26.1" y="247.75" width="9" height="1.95"/>
<rect x="26.1" y="256.75" width="9.9" height="1.95"/>
<text transform="matrix(0.877 0 0.001 1.319 36.68 258.7)">U</text>
<text transform="matrix(0.84 0 0.001 1.319 48.66 258.7)">R</text>
<text transform="matrix(0.893 0 0.001 1.319 60.57 258.7)">N</text>
<text transform="matrix(0.909 0 0.001 1.319 73.45 258.7)">Z</text>
<text transform="matrix(0.84 0 0.001 1.319 84.66 258.7)">D</text>
<rect x="102.75" y="239.9" width="1.55" height="20.9"/>
<rect x="98.3" y="239.9" width="6" height="1.35"/>
<rect x="98.3" y="259.45" width="6" height="1.35"/>
</g>
<g fill="#00FF00" stroke="#00FF00">
<text transform="matrix(1.064 0 0.001 1.319 163.15 258.7)">3</text>
<text transform="matrix(1.064 0 0.001 1.319 175.15 258.7)">3</text>
<rect x="188.6" y="256" width="2.8" height="2.5"/>
<path d="M203.9 240.3H206.2V258.5H203.9V243.3Q202.9 244.2 200.9 244.4V243Q202.6 242.8 203.9 240.3Z"/>
<text transform="matrix(1.087 0 0.001 1.319 210.91 258.7)">6</text>
</g>
<g fill="#00FF00" stroke="#00FF00">
<text transform="matrix(1 0 0.001 1.319 253.5 258.7)">4</text>
<text transform="matrix(1.099 0 0.001 1.319 264.9 258.7)">2</text>
<rect x="278.6" y="256" width="2.8" height="2.5"/>
<text transform="matrix(1 0 0.001 1.319 289.5 258.7)">4</text>
<text transform="matrix(1.053 0 0.001 1.319 301.16 258.7)">5</text>
</g>
<g fill="#00FF00" stroke="#00FF00">
<rect x="331.1" y="249.45" width="11.4" height="1.6"/>
<path d="M347.9 240.3H350.2V258.5H347.9V243.3Q346.9 244.2 344.9 244.4V243Q346.6 242.8 347.9 240.3Z"/>
<text transform="matrix(1.053 0 0.001 1.319 355.16 258.7)">0</text>
<rect x="368.6" y="256" width="2.8" height="2.5"/>
<text transform="matrix(1 0 0.001 1.319 379.5 258.7)">4</text>
<text transform="matrix(1.087 0 0.001 1.319 390.91 258.7)">6</text>
</g>
<g fill="#00FF00" stroke="#00FF00">
<rect x="421.1" y="249.45" width="11.4" height="1.6"/>
<text transform="matrix(1.087 0 0.001 1.319 432.91 258.7)">6</text>
<text transform="matrix(1.053 0 0.001 1.319 445.16 258.7)">0</text>
<rect x="458.6" y="256" width="2.8" height="2.5"/>
<text transform="matrix(1.064 0 0.001 1.319 469.15 258.7)">3</text>
<text transform="matrix(1.087 0 0.001 1.319 480.91 258.7)">6</text>
</g>
<g fill="#00FF00" stroke="#00FF00">
<rect x="511.1" y="249.45" width="11.4" height="1.6"/>
<text transform="matrix(1.053 0 0.001 1.319 523.16 258.7)">5</text>
<text transform="matrix(1.064 0 0.001 1.319 535.15 258.7)">3</text>
<rect x="548.6" y="256" width="2.8" height="2.5"/>
<text transform="matrix(1.099 0 0.001 1.319 558.9 258.7)">2</text>
<text transform="matrix(1.053 0 0.001 1.319 571.16 258.7)">0</text>
</g>
<g fill="#00FF00" stroke="#00FF00">
<text transform="matrix(1.099 0 0.001 1.319 600.9 258.7)">2</text>
<text transform="matrix(1.075 0 0.001 1.319 613.03 258.7)">9</text>
<text transform="matrix(1.087 0 0.001 1.319 624.91 258.7)">6</text>
<rect x="638.6" y="256" width="2.8" height="2.5"/>
<text transform="matrix(1.053 0 0.001 1.319 649.16 258.7)">5</text>
<text transform="matrix(1.099 0 0.001 1.319 660.9 258.7)">2</text>
</g>
<g fill="#00FF00" stroke="#00FF00">
<text transform="matrix(1.099 0 0.001 1.319 710.9 258.7)">2</text>
<text transform="matrix(1 0 0.001 1.319 723.5 258.7)">4</text>
<text transform="matrix(1.064 0 0.001 1.319 735.04 258.7)">8</text>
<rect x="748.6" y="256" width="2.8" height="2.5"/>
<text transform="matrix(1.053 0 0.001 1.319 759.16 258.7)">0</text>
<text transform="matrix(1.075 0 0.001 1.319 771.03 258.7)">9</text>
</g>
<g fill="#00FF00" stroke="#00FF00">
<rect x="17.8" y="262.9" width="1.55" height="20.9"/>
<rect x="17.8" y="262.9" width="6" height="1.35"/>
<rect x="17.8" y="282.45" width="6" height="1.35"/>
<text transform="matrix(0.893 0 0.001 1.319 24.57 281.7)">N</text>
<text transform="matrix(0.909 0 0.001 1.319 37.45 281.7)">Z</text>
<text transform="matrix(0.84 0 0.001 1.319 48.66 281.7)">D</text>
<path class="sk" fill="none" stroke="#00FF00" stroke-width="2" d="M70.5 263.3V276.95A3.65 3.55 0 0 1 63.2 276.95V273.9"/>
<text transform="matrix(0.935 0 0.001 1.319 72.5 281.7)">P</text>
<text transform="matrix(0.806 0 0.001 1.319 85.6 281.7)">Y</text>
<rect x="102.75" y="262.9" width="1.55" height="20.9"/>
<rect x="98.3" y="262.9" width="6" height="1.35"/>
<rect x="98.3" y="282.45" width="6" height="1.35"/>
</g>
<g fill="#00FF00" stroke="#00FF00">
<rect x="139.1" y="272.45" width="11.4" height="1.6"/>
<path d="M155.9 263.3H158.2V281.5H155.9V266.3Q154.9 267.2 152.9 267.4V266Q154.6 265.8 155.9 263.3Z"/>
<text transform="matrix(1.053 0 0.001 1.319 163.16 281.7)">0</text>
<text transform="matrix(1.064 0 0.001 1.319 175.04 281.7)">8</text>
<rect x="188.6" y="279" width="2.8" height="2.5"/>
<path d="M203.9 263.3H206.2V281.5H203.9V266.3Q202.9 267.2 200.9 267.4V266Q202.6 265.8 203.9 263.3Z"/>
<text transform="matrix(1.053 0 0.001 1.319 211.16 281.7)">0</text>
</g>
<g fill="#00FF00" stroke="#00FF00">
<rect x="229.1" y="272.45" width="11.4" height="1.6"/>
<path d="M245.9 263.3H248.2V281.5H245.9V266.3Q244.9 267.2 242.9 267.4V266Q244.6 265.8 245.9 263.3Z"/>
<text transform="matrix(1.064 0 0.001 1.319 253.15 281.7)">3</text>
<text transform="matrix(1.053 0 0.001 1.319 265.16 281.7)">5</text>
<rect x="278.6" y="279" width="2.8" height="2.5"/>
<text transform="matrix(1.053 0 0.001 1.319 289.16 281.7)">0</text>
<path d="M305.9 263.3H308.2V281.5H305.9V266.3Q304.9 267.2 302.9 267.4V266Q304.6 265.8 305.9 263.3Z"/>
</g>
<g fill="#00FF00" stroke="#00FF00">
<rect x="331.1" y="272.45" width="11.4" height="1.6"/>
<text transform="matrix(1.075 0 0.001 1.319 343.03 281.7)">9</text>
<text transform="matrix(1.099 0 0.001 1.319 354.9 281.7)">2</text>
<rect x="368.6" y="279" width="2.8" height="2.5"/>
<text transform="matrix(1.099 0 0.001 1.319 378.9 281.7)">2</text>
<path d="M395.9 263.3H398.2V281.5H395.9V266.3Q394.9 267.2 392.9 267.4V266Q394.6 265.8 395.9 263.3Z"/>
</g>
<g fill="#00FF00" stroke="#00FF00">
<rect x="421.1" y="272.45" width="11.4" height="1.6"/>
<text transform="matrix(1.064 0 0.001 1.319 433.15 281.7)">3</text>
<text transform="matrix(1.087 0 0.001 1.319 444.91 281.7)">6</text>
<rect x="458.6" y="279" width="2.8" height="2.5"/>
<text transform="matrix(1.099 0 0.001 1.319 468.9 281.7)">7</text>
<text transform="matrix(1.087 0 0.001 1.319 480.91 281.7)">6</text>
</g>
<g fill="#00FF00" stroke="#00FF00">
<path d="M515.9 263.3H518.2V281.5H515.9V266.3Q514.9 267.2 512.9 267.4V266Q514.6 265.8 515.9 263.3Z"/>
<text transform="matrix(1.064 0 0.001 1.319 523.04 281.7)">8</text>
<text transform="matrix(1.064 0 0.001 1.319 535.04 281.7)">8</text>
<rect x="548.6" y="279" width="2.8" height="2.5"/>
<text transform="matrix(1.099 0 0.001 1.319 558.9 281.7)">2</text>
<text transform="matrix(1 0 0.001 1.319 571.5 281.7)">4</text>
</g>
<g fill="#00FF00" stroke="#00FF00">
<text transform="matrix(1.064 0 0.001 1.319 601.15 281.7)">3</text>
<text transform="matrix(1.075 0 0.001 1.319 613.03 281.7)">9</text>
<text transform="matrix(1 0 0.001 1.319 625.5 281.7)">4</text>
<rect x="638.6" y="279" width="2.8" height="2.5"/>
<text transform="matrix(1.075 0 0.001 1.319 649.03 281.7)">9</text>
<text transform="matrix(1 0 0.001 1.319 661.5 281.7)">4</text>
</g>
<g fill="#00FF00" stroke="#00FF00">
<text transform="matrix(1.099 0 0.001 1.319 710.9 281.7)">2</text>
<path d="M727.9 263.3H730.2V281.5H727.9V266.3Q726.9 267.2 724.9 267.4V266Q726.6 265.8 727.9 263.3Z"/>
<path d="M739.9 263.3H742.2V281.5H739.9V266.3Q738.9 267.2 736.9 267.4V266Q738.6 265.8 739.9 263.3Z"/>
<rect x="748.6" y="279" width="2.8" height="2.5"/>
<path d="M763.9 263.3H766.2V281.5H763.9V266.3Q762.9 267.2 760.9 267.4V266Q762.6 265.8 763.9 263.3Z"/>
<text transform="matrix(1.053 0 0.001 1.319 771.16 281.7)">0</text>
</g>
<g fill="#00FF00" stroke="#00FF00">
<rect x="17.8" y="285.9" width="1.55" height="20.9"/>
<rect x="17.8" y="285.9" width="6" height="1.35"/>
<rect x="17.8" y="305.45" width="6" height="1.35"/>
<rect x="26" y="286.3" width="2.4" height="18.4"/>
<rect x="26.1" y="286.3" width="9.9" height="1.95"/>
<rect x="26.1" y="293.75" width="9" height="1.95"/>
<rect x="26.1" y="302.75" width="9.9" height="1.95"/>
<text transform="matrix(0.877 0 0.001 1.319 36.68 304.7)">U</text>
<text transform="matrix(0.84 0 0.001 1.319 48.66 304.7)">R</text>
<text transform="matrix(0.877 0 0.001 1.319 60.68 304.7)">U</text>
<text transform="matrix(0.87 0 0.001 1.319 73.22 304.7)">S</text>
<text transform="matrix(0.84 0 0.001 1.319 84.66 304.7)">D</text>
<rect x="102.75" y="285.9" width="1.55" height="20.9"/>
<rect x="98.3" y="285.9" width="6" height="1.35"/>
<rect x="98.3" y="305.45" width="6" height="1.35"/>
</g>
<g fill="#00FF00" stroke="#00FF00">
<rect x="151.1" y="295.45" width="11.4" height="1.6"/>
<text transform="matrix(1.053 0 0.001 1.319 163.16 304.7)">5</text>
<text transform="matrix(1.064 0 0.001 1.319 175.15 304.7)">3</text>
<rect x="188.6" y="302" width="2.8" height="2.5"/>
<text transform="matrix(1.053 0 0.001 1.319 199.16 304.7)">0</text>
<text transform="matrix(1.099 0 0.001 1.319 210.9 304.7)">7</text>
</g>
<g fill="#00FF00" stroke="#00FF00">
<rect x="241.1" y="295.45" width="11.4" height="1.6"/>
<text transform="matrix(1.075 0 0.001 1.319 253.03 304.7)">9</text>
<text transform="matrix(1.075 0 0.001 1.319 265.03 304.7)">9</text>
<rect x="278.6" y="302" width="2.8" height="2.5"/>
<text transform="matrix(1.099 0 0.001 1.319 288.9 304.7)">2</text>
<text transform="matrix(1.099 0 0.001 1.319 300.9 304.7)">2</text>
</g>
<g fill="#00FF00" stroke="#00FF00">
<rect x="319.1" y="295.45" width="11.4" height="1.6"/>
<path d="M335.9 286.3H338.2V304.5H335.9V289.3Q334.9 290.2 332.9 290.4V289Q334.6 288.8 335.9 286.3Z"/>
<text transform="matrix(1.053 0 0.001 1.319 343.16 304.7)">0</text>
<text transform="matrix(1.075 0 0.001 1.319 355.03 304.7)">9</text>
<rect x="368.6" y="302" width="2.8" height="2.5"/>
<text transform="matrix(1.053 0 0.001 1.319 379.16 304.7)">0</text>
<text transform="matrix(1.053 0 0.001 1.319 391.16 304.7)">5</text>
</g>
<g fill="#00FF00" stroke="#00FF00">
<rect x="421.1" y="295.45" width="11.4" height="1.6"/>
<text transform="matrix(1.099 0 0.001 1.319 432.9 304.7)">7</text>
<text transform="matrix(1.064 0 0.001 1.319 445.04 304.7)">8</text>
<rect x="458.6" y="302" width="2.8" height="2.5"/>
<text transform="matrix(1.064 0 0.001 1.319 469.15 304.7)">3</text>
<text transform="matrix(1.064 0 0.001 1.319 481.04 304.7)">8</text>
</g>
<g fill="#00FF00" stroke="#00FF00">
<path d="M515.9 286.3H518.2V304.5H515.9V289.3Q514.9 290.2 512.9 290.4V289Q514.6 288.8 515.9 286.3Z"/>
<text transform="matrix(1.075 0 0.001 1.319 523.03 304.7)">9</text>
<text transform="matrix(1.064 0 0.001 1.319 535.04 304.7)">8</text>
<rect x="548.6" y="302" width="2.8" height="2.5"/>
<path d="M563.9 286.3H566.2V304.5H563.9V289.3Q562.9 290.2 560.9 290.4V289Q562.6 288.8 563.9 286.3Z"/>
<text transform="matrix(1.064 0 0.001 1.319 571.15 304.7)">3</text>
</g>
<g fill="#00FF00" stroke="#00FF00">
<path d="M605.9 286.3H608.2V304.5H605.9V289.3Q604.9 290.2 602.9 290.4V289Q604.6 288.8 605.9 286.3Z"/>
<text transform="matrix(1.099 0 0.001 1.319 612.9 304.7)">2</text>
<text transform="matrix(1 0 0.001 1.319 625.5 304.7)">4</text>
<rect x="638.6" y="302" width="2.8" height="2.5"/>
<text transform="matrix(1 0 0.001 1.319 649.5 304.7)">4</text>
<text transform="matrix(1.064 0 0.001 1.319 661.04 304.7)">8</text>
</g>
<g fill="#00FF00" stroke="#00FF00">
<rect x="711.1" y="295.45" width="11.4" height="1.6"/>
<path d="M727.9 286.3H730.2V304.5H727.9V289.3Q726.9 290.2 724.9 290.4V289Q726.6 288.8 727.9 286.3Z"/>
<text transform="matrix(1.099 0 0.001 1.319 734.9 304.7)">7</text>
<rect x="748.6" y="302" width="2.8" height="2.5"/>
<path d="M763.9 286.3H766.2V304.5H763.9V289.3Q762.9 290.2 760.9 290.4V289Q762.6 288.8 763.9 286.3Z"/>
<text transform="matrix(1.099 0 0.001 1.319 770.9 304.7)">2</text>
</g>
<g fill="#00FF00" stroke="#00FF00">
<rect x="17.8" y="308.9" width="1.55" height="20.9"/>
<rect x="17.8" y="308.9" width="6" height="1.35"/>
<rect x="17.8" y="328.45" width="6" height="1.35"/>
<text transform="matrix(0.787 0 0.001 1.319 25.21 327.7)">C</text>
<text transform="matrix(0.758 0 0.001 1.319 37.92 327.7)">A</text>
<text transform="matrix(0.84 0 0.001 1.319 48.66 327.7)">D</text>
<path class="sk" fill="none" stroke="#00FF00" stroke-width="2" d="M70.5 309.3V322.95A3.65 3.55 0 0 1 63.2 322.95V319.9"/>
<text transform="matrix(0.935 0 0.001 1.319 72.5 327.7)">P</text>
<text transform="matrix(0.806 0 0.001 1.319 85.6 327.7)">Y</text>
<rect x="102.75" y="308.9" width="1.55" height="20.9"/>
<rect x="98.3" y="308.9" width="6" height="1.35"/>
<rect x="98.3" y="328.45" width="6" height="1.35"/>
</g>
<g fill="#00FF00" stroke="#00FF00">
<rect x="151.1" y="318.45" width="11.4" height="1.6"/>
<text transform="matrix(1.053 0 0.001 1.319 163.16 327.7)">5</text>
<text transform="matrix(1.099 0 0.001 1.319 174.9 327.7)">2</text>
<rect x="188.6" y="325" width="2.8" height="2.5"/>
<path d="M203.9 309.3H206.2V327.5H203.9V312.3Q202.9 313.2 200.9 313.4V312Q202.6 311.8 203.9 309.3Z"/>
<text transform="matrix(1.064 0 0.001 1.319 211.04 327.7)">8</text>
</g>
<g fill="#00FF00" stroke="#00FF00">
<rect x="241.1" y="318.45" width="11.4" height="1.6"/>
<text transform="matrix(1.053 0 0.001 1.319 253.16 327.7)">5</text>
<text transform="matrix(1 0 0.001 1.319 265.5 327.7)">4</text>
<rect x="278.6" y="325" width="2.8" height="2.5"/>
<text transform="matrix(1.099 0 0.001 1.319 288.9 327.7)">7</text>
<text transform="matrix(1.064 0 0.001 1.319 301.04 327.7)">8</text>
</g>
<g fill="#00FF00" stroke="#00FF00">
<rect x="331.1" y="318.45" width="11.4" height="1.6"/>
<text transform="matrix(1.099 0 0.001 1.319 342.9 327.7)">7</text>
<text transform="matrix(1.087 0 0.001 1.319 354.91 327.7)">6</text>
<rect x="368.6" y="325" width="2.8" height="2.5"/>
<text transform="matrix(1.075 0 0.001 1.319 379.03 327.7)">9</text>
<text transform="matrix(1 0 0.001 1.319 391.5 327.7)">4</text>
</g>
<g fill="#00FF00" stroke="#00FF00">
<rect x="409.1" y="318.45" width="11.4" height="1.6"/>
<path d="M425.9 309.3H428.2V327.5H425.9V312.3Q424.9 313.2 422.9 313.4V312Q424.6 311.8 425.9 309.3Z"/>
<text transform="matrix(1.064 0 0.001 1.319 433.15 327.7)">3</text>
<text transform="matrix(1.064 0 0.001 1.319 445.04 327.7)">8</text>
<rect x="458.6" y="325" width="2.8" height="2.5"/>
<text transform="matrix(1.099 0 0.001 1.319 468.9 327.7)">2</text>
<text transform="matrix(1.064 0 0.001 1.319 481.15 327.7)">3</text>
</g>
<g fill="#00FF00" stroke="#00FF00">
<rect x="499.1" y="318.45" width="11.4" height="1.6"/>
<path d="M515.9 309.3H518.2V327.5H515.9V312.3Q514.9 313.2 512.9 313.4V312Q514.6 311.8 515.9 309.3Z"/>
<text transform="matrix(1.099 0 0.001 1.319 522.9 327.7)">7</text>
<text transform="matrix(1.087 0 0.001 1.319 534.91 327.7)">6</text>
<rect x="548.6" y="325" width="2.8" height="2.5"/>
<text transform="matrix(1.099 0 0.001 1.319 558.9 327.7)">7</text>
<text transform="matrix(1.075 0 0.001 1.319 571.03 327.7)">9</text>
</g>
<g fill="#00FF00" stroke="#00FF00">
<text transform="matrix(1 0 0.001 1.319 601.5 327.7)">4</text>
<text transform="matrix(1.087 0 0.001 1.319 612.91 327.7)">6</text>
<text transform="matrix(1.053 0 0.001 1.319 625.16 327.7)">5</text>
<rect x="638.6" y="325" width="2.8" height="2.5"/>
<text transform="matrix(1.099 0 0.001 1.319 648.9 327.7)">2</text>
<path d="M665.9 309.3H668.2V327.5H665.9V312.3Q664.9 313.2 662.9 313.4V312Q664.6 311.8 665.9 309.3Z"/>
</g>
<g fill="#00FF00" stroke="#00FF00">
<rect x="711.1" y="318.45" width="11.4" height="1.6"/>
<text transform="matrix(1.064 0 0.001 1.319 723.15 327.7)">3</text>
<text transform="matrix(1.064 0 0.001 1.319 735.15 327.7)">3</text>
<rect x="748.6" y="325" width="2.8" height="2.5"/>
<text transform="matrix(1.099 0 0.001 1.319 758.9 327.7)">7</text>
<text transform="matrix(1.064 0 0.001 1.319 771.15 327.7)">3</text>
</g>
<g fill="#00FF00" stroke="#00FF00">
<rect x="17.8" y="331.9" width="1.55" height="20.9"/>
<rect x="17.8" y="331.9" width="6" height="1.35"/>
<rect x="17.8" y="351.45" width="6" height="1.35"/>
<text transform="matrix(0.893 0 0.001 1.319 24.57 350.7)">N</text>
<text transform="matrix(0.909 0 0.001 1.319 37.45 350.7)">Z</text>
<text transform="matrix(0.84 0 0.001 1.319 48.66 350.7)">D</text>
<text transform="matrix(0.877 0 0.001 1.319 60.68 350.7)">U</text>
<text transform="matrix(0.87 0 0.001 1.319 73.22 350.7)">S</text>
<text transform="matrix(0.84 0 0.001 1.319 84.66 350.7)">D</text>
<rect x="102.75" y="331.9" width="1.55" height="20.9"/>
<rect x="98.3" y="331.9" width="6" height="1.35"/>
<rect x="98.3" y="351.45" width="6" height="1.35"/>
</g>
<g fill="#00FF00" stroke="#00FF00">
<rect x="151.1" y="341.45" width="11.4" height="1.6"/>
<text transform="matrix(1.064 0 0.001 1.319 163.04 350.7)">8</text>
<text transform="matrix(1.053 0 0.001 1.319 175.16 350.7)">0</text>
<rect x="188.6" y="348" width="2.8" height="2.5"/>
<text transform="matrix(1 0 0.001 1.319 199.5 350.7)">4</text>
<text transform="matrix(1.075 0 0.001 1.319 211.03 350.7)">9</text>
</g>
<g fill="#00FF00" stroke="#00FF00">
<rect x="229.1" y="341.45" width="11.4" height="1.6"/>
<path d="M245.9 332.3H248.2V350.5H245.9V335.3Q244.9 336.2 242.9 336.4V335Q244.6 334.8 245.9 332.3Z"/>
<text transform="matrix(1.064 0 0.001 1.319 253.15 350.7)">3</text>
<text transform="matrix(1 0 0.001 1.319 265.5 350.7)">4</text>
<rect x="278.6" y="348" width="2.8" height="2.5"/>
<path d="M293.9 332.3H296.2V350.5H293.9V335.3Q292.9 336.2 290.9 336.4V335Q292.6 334.8 293.9 332.3Z"/>
<text transform="matrix(1.053 0 0.001 1.319 301.16 350.7)">0</text>
</g>
<g fill="#00FF00" stroke="#00FF00">
<rect x="331.1" y="341.45" width="11.4" height="1.6"/>
<text transform="matrix(1.064 0 0.001 1.319 343.04 350.7)">8</text>
<text transform="matrix(1.064 0 0.001 1.319 355.04 350.7)">8</text>
<rect x="368.6" y="348" width="2.8" height="2.5"/>
<text transform="matrix(1.099 0 0.001 1.319 378.9 350.7)">7</text>
<path d="M395.9 332.3H398.2V350.5H395.9V335.3Q394.9 336.2 392.9 336.4V335Q394.6 334.8 395.9 332.3Z"/>
</g>
<g fill="#00FF00" stroke="#00FF00">
<rect x="433.1" y="341.45" width="11.4" height="1.6"/>
<text transform="matrix(1.087 0 0.001 1.319 444.91 350.7)">6</text>
<rect x="458.6" y="348" width="2.8" height="2.5"/>
<text transform="matrix(1.099 0 0.001 1.319 468.9 350.7)">2</text>
<text transform="matrix(1.099 0 0.001 1.319 480.9 350.7)">2</text>
</g>
<g fill="#00FF00" stroke="#00FF00">
<text transform="matrix(1.099 0 0.001 1.319 510.9 350.7)">2</text>
<text transform="matrix(1.099 0 0.001 1.319 522.9 350.7)">7</text>
<text transform="matrix(1.053 0 0.001 1.319 535.16 350.7)">0</text>
<rect x="548.6" y="348" width="2.8" height="2.5"/>
<text transform="matrix(1.064 0 0.001 1.319 559.04 350.7)">8</text>
<text transform="matrix(1.099 0 0.001 1.319 570.9 350.7)">2</text>
</g>
<g fill="#00FF00" stroke="#00FF00">
<rect x="601.1" y="341.45" width="11.4" height="1.6"/>
<text transform="matrix(1.075 0 0.001 1.319 613.03 350.7)">9</text>
<text transform="matrix(1.087 0 0.001 1.319 624.91 350.7)">6</text>
<rect x="638.6" y="348" width="2.8" height="2.5"/>
<text transform="matrix(1.075 0 0.001 1.319 649.03 350.7)">9</text>
<text transform="matrix(1 0 0.001 1.319 661.5 350.7)">4</text>
</g>
<g fill="#00FF00" stroke="#00FF00">
<rect x="699.1" y="341.45" width="11.4" height="1.6"/>
<path d="M715.9 332.3H718.2V350.5H715.9V335.3Q714.9 336.2 712.9 336.4V335Q714.6 334.8 715.9 332.3Z"/>
<text transform="matrix(1.064 0 0.001 1.319 723.15 350.7)">3</text>
<text transform="matrix(1.053 0 0.001 1.319 735.16 350.7)">5</text>
<rect x="748.6" y="348" width="2.8" height="2.5"/>
<text transform="matrix(1.087 0 0.001 1.319 758.91 350.7)">6</text>
<text transform="matrix(1.064 0 0.001 1.319 771.15 350.7)">3</text>
</g>
<g fill="#00FF00" stroke="#00FF00">
<rect x="17.8" y="354.9" width="1.55" height="20.9"/>
<rect x="17.8" y="354.9" width="6" height="1.35"/>
<rect x="17.8" y="374.45" width="6" height="1.35"/>
<text transform="matrix(0.763 0 0.001 1.319 25.24 373.7)">G</text>
<text transform="matrix(0.935 0 0.001 1.319 36.5 373.7)">B</text>
<text transform="matrix(0.935 0 0.001 1.319 48.5 373.7)">P</text>
<text transform="matrix(0.758 0 0.001 1.319 61.92 373.7)">A</text>
<text transform="matrix(0.877 0 0.001 1.319 72.68 373.7)">U</text>
<text transform="matrix(0.84 0 0.001 1.319 84.66 373.7)">D</text>
<rect x="102.75" y="354.9" width="1.55" height="20.9"/>
<rect x="98.3" y="354.9" width="6" height="1.35"/>
<rect x="98.3" y="374.45" width="6" height="1.35"/>
</g>
<g fill="#00FF00" stroke="#00FF00">
<rect x="151.1" y="364.45" width="11.4" height="1.6"/>
<text transform="matrix(1 0 0.001 1.319 163.5 373.7)">4</text>
<text transform="matrix(1.099 0 0.001 1.319 174.9 373.7)">7</text>
<rect x="188.6" y="371" width="2.8" height="2.5"/>
<text transform="matrix(1.075 0 0.001 1.319 199.03 373.7)">9</text>
<text transform="matrix(1.099 0 0.001 1.319 210.9 373.7)">7</text>
</g>
<g fill="#00FF00" stroke="#00FF00">
<rect x="241.1" y="364.45" width="11.4" height="1.6"/>
<text transform="matrix(1.099 0 0.001 1.319 252.9 373.7)">2</text>
<text transform="matrix(1.087 0 0.001 1.319 264.91 373.7)">6</text>
<rect x="278.6" y="371" width="2.8" height="2.5"/>
<text transform="matrix(1 0 0.001 1.319 289.5 373.7)">4</text>
<text transform="matrix(1.087 0 0.001 1.319 300.91 373.7)">6</text>
</g>
<g fill="#00FF00" stroke="#00FF00">
<rect x="331.1" y="364.45" width="11.4" height="1.6"/>
<text transform="matrix(1.099 0 0.001 1.319 342.9 373.7)">2</text>
<text transform="matrix(1.064 0 0.001 1.319 355.15 373.7)">3</text>
<rect x="368.6" y="371" width="2.8" height="2.5"/>
<text transform="matrix(1 0 0.001 1.319 379.5 373.7)">4</text>
<text transform="matrix(1 0 0.001 1.319 391.5 373.7)">4</text>
</g>
<g fill="#00FF00" stroke="#00FF00">
<text transform="matrix(1.053 0 0.001 1.319 445.16 373.7)">5</text>
<rect x="458.6" y="371" width="2.8" height="2.5"/>
<path d="M473.9 355.3H476.2V373.5H473.9V358.3Q472.9 359.2 470.9 359.4V358Q472.6 357.8 473.9 355.3Z"/>
<text transform="matrix(1.075 0 0.001 1.319 481.03 373.7)">9</text>
</g>
<g fill="#00FF00" stroke="#00FF00">
<path d="M515.9 355.3H518.2V373.5H515.9V358.3Q514.9 359.2 512.9 359.4V358Q514.6 357.8 515.9 355.3Z"/>
<path d="M527.9 355.3H530.2V373.5H527.9V358.3Q526.9 359.2 524.9 359.4V358Q526.6 357.8 527.9 355.3Z"/>
<text transform="matrix(1.087 0 0.001 1.319 534.91 373.7)">6</text>
<rect x="548.6" y="371" width="2.8" height="2.5"/>
<path d="M563.9 355.3H566.2V373.5H563.9V358.3Q562.9 359.2 560.9 359.4V358Q562.6 357.8 563.9 355.3Z"/>
<text transform="matrix(1.099 0 0.001 1.319 570.9 373.7)">2</text>
</g>
<g fill="#00FF00" stroke="#00FF00">
<rect x="589.1" y="364.45" width="11.4" height="1.6"/>
<text transform="matrix(1 0 0.001 1.319 601.5 373.7)">4</text>
<text transform="matrix(1.053 0 0.001 1.319 613.16 373.7)">0</text>
<text transform="matrix(1.087 0 0.001 1.319 624.91 373.7)">6</text>
<rect x="638.6" y="371" width="2.8" height="2.5"/>
<text transform="matrix(1.099 0 0.001 1.319 648.9 373.7)">2</text>
<text transform="matrix(1.053 0 0.001 1.319 661.16 373.7)">0</text>
</g>
<g fill="#00FF00" stroke="#00FF00">
<rect x="699.1" y="364.45" width="11.4" height="1.6"/>
<text transform="matrix(1.064 0 0.001 1.319 711.15 373.7)">3</text>
<text transform="matrix(1.064 0 0.001 1.319 723.04 373.7)">8</text>
<text transform="matrix(1.099 0 0.001 1.319 734.9 373.7)">2</text>
<rect x="748.6" y="371" width="2.8" height="2.5"/>
<text transform="matrix(1.099 0 0.001 1.319 758.9 373.7)">7</text>
<text transform="matrix(1.087 0 0.001 1.319 770.91 373.7)">6</text>
</g>
<g fill="#00FF00" stroke="#00FF00">
<rect x="17.8" y="377.9" width="1.55" height="20.9"/>
<rect x="17.8" y="377.9" width="6" height="1.35"/>
<rect x="17.8" y="397.45" width="6" height="1.35"/>
<text transform="matrix(0.758 0 0.001 1.319 25.92 396.7)">A</text>
<text transform="matrix(0.877 0 0.001 1.319 36.68 396.7)">U</text>
<text transform="matrix(0.84 0 0.001 1.319 48.66 396.7)">D</text>
<text transform="matrix(0.787 0 0.001 1.319 61.21 396.7)">C</text>
<text transform="matrix(0.758 0 0.001 1.319 73.92 396.7)">A</text>
<text transform="matrix(0.84 0 0.001 1.319 84.66 396.7)">D</text>
<rect x="102.75" y="377.9" width="1.55" height="20.9"/>
<rect x="98.3" y="377.9" width="6" height="1.35"/>
<rect x="98.3" y="397.45" width="6" height="1.35"/>
</g>
<g fill="#00FF00" stroke="#00FF00">
<rect x="151.1" y="387.45" width="11.4" height="1.6"/>
<path d="M167.9 378.3H170.2V396.5H167.9V381.3Q166.9 382.2 164.9 382.4V381Q166.6 380.8 167.9 378.3Z"/>
<text transform="matrix(1.075 0 0.001 1.319 175.03 396.7)">9</text>
<rect x="188.6" y="394" width="2.8" height="2.5"/>
<text transform="matrix(1.053 0 0.001 1.319 199.16 396.7)">0</text>
<text transform="matrix(1.053 0 0.001 1.319 211.16 396.7)">0</text>
</g>
<g fill="#00FF00" stroke="#00FF00">
<rect x="241.1" y="387.45" width="11.4" height="1.6"/>
<text transform="matrix(1.087 0 0.001 1.319 252.91 396.7)">6</text>
<text transform="matrix(1.053 0 0.001 1.319 265.16 396.7)">5</text>
<rect x="278.6" y="394" width="2.8" height="2.5"/>
<text transform="matrix(1.064 0 0.001 1.319 289.15 396.7)">3</text>
<text transform="matrix(1.053 0 0.001 1.319 301.16 396.7)">5</text>
</g>
<g fill="#00FF00" stroke="#00FF00">
<rect x="331.1" y="387.45" width="11.4" height="1.6"/>
<text transform="matrix(1.075 0 0.001 1.319 343.03 396.7)">9</text>
<text transform="matrix(1.064 0 0.001 1.319 355.04 396.7)">8</text>
<rect x="368.6" y="394" width="2.8" height="2.5"/>
<text transform="matrix(1.053 0 0.001 1.319 379.16 396.7)">0</text>
<text transform="matrix(1.087 0 0.001 1.319 390.91 396.7)">6</text>
</g>
<g fill="#00FF00" stroke="#00FF00">
<rect x="409.1" y="387.45" width="11.4" height="1.6"/>
<path d="M425.9 378.3H428.2V396.5H425.9V381.3Q424.9 382.2 422.9 382.4V381Q424.6 380.8 425.9 378.3Z"/>
<text transform="matrix(1.099 0 0.001 1.319 432.9 396.7)">2</text>
<text transform="matrix(1 0 0.001 1.319 445.5 396.7)">4</text>
<rect x="458.6" y="394" width="2.8" height="2.5"/>
<text transform="matrix(1.099 0 0.001 1.319 468.9 396.7)">7</text>
<text transform="matrix(1.064 0 0.001 1.319 481.04 396.7)">8</text>
</g>
<g fill="#00FF00" stroke="#00FF00">
<rect x="499.1" y="387.45" width="11.4" height="1.6"/>
<path d="M515.9 378.3H518.2V396.5H515.9V381.3Q514.9 382.2 512.9 382.4V381Q514.6 380.8 515.9 378.3Z"/>
<text transform="matrix(1.053 0 0.001 1.319 523.16 396.7)">0</text>
<text transform="matrix(1.053 0 0.001 1.319 535.16 396.7)">5</text>
<rect x="548.6" y="394" width="2.8" height="2.5"/>
<text transform="matrix(1.053 0 0.001 1.319 559.16 396.7)">5</text>
<path d="M575.9 378.3H578.2V396.5H575.9V381.3Q574.9 382.2 572.9 382.4V381Q574.6 380.8 575.9 378.3Z"/>
</g>
<g fill="#00FF00" stroke="#00FF00">
<rect x="601.1" y="387.45" width="11.4" height="1.6"/>
<text transform="matrix(1.087 0 0.001 1.319 612.91 396.7)">6</text>
<text transform="matrix(1.053 0 0.001 1.319 625.16 396.7)">0</text>
<rect x="638.6" y="394" width="2.8" height="2.5"/>
<text transform="matrix(1.099 0 0.001 1.319 648.9 396.7)">7</text>
<text transform="matrix(1.064 0 0.001 1.319 661.04 396.7)">8</text>
</g>
<g fill="#00FF00" stroke="#00FF00">
<rect x="699.1" y="387.45" width="11.4" height="1.6"/>
<text transform="matrix(1 0 0.001 1.319 711.5 396.7)">4</text>
<text transform="matrix(1.099 0 0.001 1.319 722.9 396.7)">7</text>
<text transform="matrix(1.064 0 0.001 1.319 735.15 396.7)">3</text>
<rect x="748.6" y="394" width="2.8" height="2.5"/>
<text transform="matrix(1 0 0.001 1.319 759.5 396.7)">4</text>
<text transform="matrix(1.064 0 0.001 1.319 771.04 396.7)">8</text>
</g>
<g fill="#00FF00" stroke="#00FF00">
<rect x="17.8" y="400.9" width="1.55" height="20.9"/>
<rect x="17.8" y="400.9" width="6" height="1.35"/>
<rect x="17.8" y="420.45" width="6" height="1.35"/>
<text transform="matrix(0.758 0 0.001 1.319 25.92 419.7)">A</text>
<text transform="matrix(0.877 0 0.001 1.319 36.68 419.7)">U</text>
<text transform="matrix(0.84 0 0.001 1.319 48.66 419.7)">D</text>
<path class="sk" fill="none" stroke="#00FF00" stroke-width="2" d="M70.5 401.3V414.95A3.65 3.55 0 0 1 63.2 414.95V411.9"/>
<text transform="matrix(0.935 0 0.001 1.319 72.5 419.7)">P</text>
<text transform="matrix(0.806 0 0.001 1.319 85.6 419.7)">Y</text>
<rect x="102.75" y="400.9" width="1.55" height="20.9"/>
<rect x="98.3" y="400.9" width="6" height="1.35"/>
<rect x="98.3" y="420.45" width="6" height="1.35"/>
</g>
<g fill="#00FF00" stroke="#00FF00">
<rect x="151.1" y="410.45" width="11.4" height="1.6"/>
<text transform="matrix(1.099 0 0.001 1.319 162.9 419.7)">7</text>
<text transform="matrix(1.099 0 0.001 1.319 174.9 419.7)">2</text>
<rect x="188.6" y="417" width="2.8" height="2.5"/>
<text transform="matrix(1.053 0 0.001 1.319 199.16 419.7)">5</text>
<text transform="matrix(1.064 0 0.001 1.319 211.15 419.7)">3</text>
</g>
<g fill="#00FF00" stroke="#00FF00">
<rect x="229.1" y="410.45" width="11.4" height="1.6"/>
<path d="M245.9 401.3H248.2V419.5H245.9V404.3Q244.9 405.2 242.9 405.4V404Q244.6 403.8 245.9 401.3Z"/>
<text transform="matrix(1.099 0 0.001 1.319 252.9 419.7)">2</text>
<path d="M269.9 401.3H272.2V419.5H269.9V404.3Q268.9 405.2 266.9 405.4V404Q268.6 403.8 269.9 401.3Z"/>
<rect x="278.6" y="417" width="2.8" height="2.5"/>
<text transform="matrix(1.064 0 0.001 1.319 289.04 419.7)">8</text>
<path d="M305.9 401.3H308.2V419.5H305.9V404.3Q304.9 405.2 302.9 405.4V404Q304.6 403.8 305.9 401.3Z"/>
</g>
<g fill="#00FF00" stroke="#00FF00">
<rect x="319.1" y="410.45" width="11.4" height="1.6"/>
<path d="M335.9 401.3H338.2V419.5H335.9V404.3Q334.9 405.2 332.9 405.4V404Q334.6 403.8 335.9 401.3Z"/>
<text transform="matrix(1.099 0 0.001 1.319 342.9 419.7)">7</text>
<text transform="matrix(1.099 0 0.001 1.319 354.9 419.7)">7</text>
<rect x="368.6" y="417" width="2.8" height="2.5"/>
<text transform="matrix(1.064 0 0.001 1.319 379.15 419.7)">3</text>
<text transform="matrix(1.053 0 0.001 1.319 391.16 419.7)">0</text>
</g>
<g fill="#00FF00" stroke="#00FF00">
<rect x="409.1" y="410.45" width="11.4" height="1.6"/>
<text transform="matrix(1.099 0 0.001 1.319 420.9 419.7)">2</text>
<text transform="matrix(1.087 0 0.001 1.319 432.91 419.7)">6</text>
<text transform="matrix(1.053 0 0.001 1.319 445.16 419.7)">5</text>
<rect x="458.6" y="417" width="2.8" height="2.5"/>
<text transform="matrix(1 0 0.001 1.319 469.5 419.7)">4</text>
<path d="M485.9 401.3H488.2V419.5H485.9V404.3Q484.9 405.2 482.9 405.4V404Q484.6 403.8 485.9 401.3Z"/>
</g>
<g fill="#00FF00" stroke="#00FF00">
<rect x="499.1" y="410.45" width="11.4" height="1.6"/>
<text transform="matrix(1.099 0 0.001 1.319 510.9 419.7)">2</text>
<text transform="matrix(1.064 0 0.001 1.319 523.04 419.7)">8</text>
<text transform="matrix(1 0 0.001 1.319 535.5 419.7)">4</text>
<rect x="548.6" y="417" width="2.8" height="2.5"/>
<text transform="matrix(1 0 0.001 1.319 559.5 419.7)">4</text>
<text transform="matrix(1.053 0 0.001 1.319 571.16 419.7)">5</text>
</g>
<g fill="#00FF00" stroke="#00FF00">
<text transform="matrix(1.064 0 0.001 1.319 601.15 419.7)">3</text>
<text transform="matrix(1.075 0 0.001 1.319 613.03 419.7)">9</text>
<text transform="matrix(1.087 0 0.001 1.319 624.91 419.7)">6</text>
<rect x="638.6" y="417" width="2.8" height="2.5"/>
<text transform="matrix(1.064 0 0.001 1.319 649.04 419.7)">8</text>
<text transform="matrix(1.087 0 0.001 1.319 660.91 419.7)">6</text>
</g>
<g fill="#00FF00" stroke="#00FF00">
<rect x="699.1" y="410.45" width="11.4" height="1.6"/>
<text transform="matrix(1.053 0 0.001 1.319 711.16 419.7)">5</text>
<text transform="matrix(1.099 0 0.001 1.319 722.9 419.7)">2</text>
<text transform="matrix(1 0 0.001 1.319 735.5 419.7)">4</text>
<rect x="748.6" y="417" width="2.8" height="2.5"/>
<text transform="matrix(1.087 0 0.001 1.319 758.91 419.7)">6</text>
<text transform="matrix(1 0 0.001 1.319 771.5 419.7)">4</text>
</g>
<g fill="#00FF00" stroke="#00FF00">
<rect x="17.8" y="423.9" width="1.55" height="20.9"/>
<rect x="17.8" y="423.9" width="6" height="1.35"/>
<rect x="17.8" y="443.45" width="6" height="1.35"/>
<text transform="matrix(0.758 0 0.001 1.319 25.92 442.7)">A</text>
<text transform="matrix(0.877 0 0.001 1.319 36.68 442.7)">U</text>
<text transform="matrix(0.84 0 0.001 1.319 48.66 442.7)">D</text>
<text transform="matrix(0.893 0 0.001 1.319 60.57 442.7)">N</text>
<text transform="matrix(0.909 0 0.001 1.319 73.45 442.7)">Z</text>
<text transform="matrix(0.84 0 0.001 1.319 84.66 442.7)">D</text>
<rect x="102.75" y="423.9" width="1.55" height="20.9"/>
<rect x="98.3" y="423.9" width="6" height="1.35"/>
<rect x="98.3" y="443.45" width="6" height="1.35"/>
</g>
<g fill="#9370DB" stroke="#9370DB">
<text transform="matrix(1.064 0 0.001 1.319 163.15 442.7)">3</text>
<text transform="matrix(1.087 0 0.001 1.319 174.91 442.7)">6</text>
<rect x="188.6" y="440" width="2.8" height="2.5"/>
<text transform="matrix(1.053 0 0.001 1.319 199.16 442.7)">5</text>
<text transform="matrix(1.099 0 0.001 1.319 210.9 442.7)">2</text>
</g>
<g fill="#00FF00" stroke="#00FF00">
<path d="M257.9 424.3H260.2V442.5H257.9V427.3Q256.9 428.2 254.9 428.4V427Q256.6 426.8 257.9 424.3Z"/>
<text transform="matrix(1 0 0.001 1.319 265.5 442.7)">4</text>
<rect x="278.6" y="440" width="2.8" height="2.5"/>
<text transform="matrix(1.053 0 0.001 1.319 289.16 442.7)">0</text>
<text transform="matrix(1 0 0.001 1.319 301.5 442.7)">4</text>
</g>
<g fill="#00FF00" stroke="#00FF00">
<rect x="331.1" y="433.45" width="11.4" height="1.6"/>
<text transform="matrix(1.064 0 0.001 1.319 343.04 442.7)">8</text>
<text transform="matrix(1.064 0 0.001 1.319 355.15 442.7)">3</text>
<rect x="368.6" y="440" width="2.8" height="2.5"/>
<text transform="matrix(1.053 0 0.001 1.319 379.16 442.7)">0</text>
<text transform="matrix(1.099 0 0.001 1.319 390.9 442.7)">7</text>
</g>
<g fill="#00FF00" stroke="#00FF00">
<rect x="409.1" y="433.45" width="11.4" height="1.6"/>
<text transform="matrix(1.099 0 0.001 1.319 420.9 442.7)">2</text>
<text transform="matrix(1.099 0 0.001 1.319 432.9 442.7)">2</text>
<text transform="matrix(1.053 0 0.001 1.319 445.16 442.7)">5</text>
<rect x="458.6" y="440" width="2.8" height="2.5"/>
<text transform="matrix(1.075 0 0.001 1.319 469.03 442.7)">9</text>
<text transform="matrix(1.099 0 0.001 1.319 480.9 442.7)">7</text>
</g>
<g fill="#00FF00" stroke="#00FF00">
<rect x="499.1" y="433.45" width="11.4" height="1.6"/>
<text transform="matrix(1 0 0.001 1.319 511.5 442.7)">4</text>
<text transform="matrix(1.099 0 0.001 1.319 522.9 442.7)">7</text>
<text transform="matrix(1.053 0 0.001 1.319 535.16 442.7)">0</text>
<rect x="548.6" y="440" width="2.8" height="2.5"/>
<text transform="matrix(1.087 0 0.001 1.319 558.91 442.7)">6</text>
<text transform="matrix(1.064 0 0.001 1.319 571.04 442.7)">8</text>
</g>
<g fill="#00FF00" stroke="#00FF00">
<text transform="matrix(1.099 0 0.001 1.319 612.9 442.7)">2</text>
<text transform="matrix(1.087 0 0.001 1.319 624.91 442.7)">6</text>
<rect x="638.6" y="440" width="2.8" height="2.5"/>
<text transform="matrix(1.075 0 0.001 1.319 649.03 442.7)">9</text>
<text transform="matrix(1.075 0 0.001 1.319 661.03 442.7)">9</text>
</g>
<g fill="#00FF00" stroke="#00FF00">
<rect x="699.1" y="433.45" width="11.4" height="1.6"/>
<text transform="matrix(1.099 0 0.001 1.319 710.9 442.7)">7</text>
<text transform="matrix(1.053 0 0.001 1.319 723.16 442.7)">0</text>
<text transform="matrix(1.099 0 0.001 1.319 734.9 442.7)">2</text>
<rect x="748.6" y="440" width="2.8" height="2.5"/>
<path d="M763.9 424.3H766.2V442.5H763.9V427.3Q762.9 428.2 760.9 428.4V427Q762.6 426.8 763.9 424.3Z"/>
<text transform="matrix(1.099 0 0.001 1.319 770.9 442.7)">7</text>
</g>
<g fill="#00FF00" stroke="#00FF00">
<rect x="17.8" y="446.9" width="1.55" height="20.9"/>
<rect x="17.8" y="446.9" width="6" height="1.35"/>
<rect x="17.8" y="466.45" width="6" height="1.35"/>
<text transform="matrix(0.758 0 0.001 1.319 25.92 465.7)">A</text>
<text transform="matrix(0.877 0 0.001 1.319 36.68 465.7)">U</text>
<text transform="matrix(0.84 0 0.001 1.319 48.66 465.7)">D</text>
<text transform="matrix(0.877 0 0.001 1.319 60.68 465.7)">U</text>
<text transform="matrix(0.87 0 0.001 1.319 73.22 465.7)">S</text>
<text transform="matrix(0.84 0 0.001 1.319 84.66 465.7)">D</text>
<rect x="102.75" y="446.9" width="1.55" height="20.9"/>
<rect x="98.3" y="446.9" width="6" height="1.35"/>
<rect x="98.3" y="466.45" width="6" height="1.35"/>
</g>
<g fill="#00FF00" stroke="#00FF00">
<rect x="151.1" y="456.45" width="11.4" height="1.6"/>
<text transform="matrix(1.064 0 0.001 1.319 163.15 465.7)">3</text>
<text transform="matrix(1.053 0 0.001 1.319 175.16 465.7)">5</text>
<rect x="188.6" y="463" width="2.8" height="2.5"/>
<text transform="matrix(1.099 0 0.001 1.319 198.9 465.7)">7</text>
<text transform="matrix(1.064 0 0.001 1.319 211.04 465.7)">8</text>
</g>
<g fill="#00FF00" stroke="#00FF00">
<rect x="229.1" y="456.45" width="11.4" height="1.6"/>
<path d="M245.9 447.3H248.2V465.5H245.9V450.3Q244.9 451.2 242.9 451.4V450Q244.6 449.8 245.9 447.3Z"/>
<path d="M257.9 447.3H260.2V465.5H257.9V450.3Q256.9 451.2 254.9 451.4V450Q256.6 449.8 257.9 447.3Z"/>
<text transform="matrix(1.099 0 0.001 1.319 264.9 465.7)">2</text>
<rect x="278.6" y="463" width="2.8" height="2.5"/>
<path d="M293.9 447.3H296.2V465.5H293.9V450.3Q292.9 451.2 290.9 451.4V450Q292.6 449.8 293.9 447.3Z"/>
<text transform="matrix(1.053 0 0.001 1.319 301.16 465.7)">5</text>
</g>
<g fill="#00FF00" stroke="#00FF00">
<rect x="319.1" y="456.45" width="11.4" height="1.6"/>
<path d="M335.9 447.3H338.2V465.5H335.9V450.3Q334.9 451.2 332.9 451.4V450Q334.6 449.8 335.9 447.3Z"/>
<text transform="matrix(1.087 0 0.001 1.319 342.91 465.7)">6</text>
<text transform="matrix(1.053 0 0.001 1.319 355.16 465.7)">5</text>
<rect x="368.6" y="463" width="2.8" height="2.5"/>
<text transform="matrix(1.064 0 0.001 1.319 379.04 465.7)">8</text>
<text transform="matrix(1.099 0 0.001 1.319 390.9 465.7)">7</text>
</g>
<g fill="#00FF00" stroke="#00FF00">
<rect x="409.1" y="456.45" width="11.4" height="1.6"/>
<text transform="matrix(1.099 0 0.001 1.319 420.9 465.7)">2</text>
<text transform="matrix(1.099 0 0.001 1.319 432.9 465.7)">2</text>
<text transform="matrix(1.099 0 0.001 1.319 444.9 465.7)">7</text>
<rect x="458.6" y="463" width="2.8" height="2.5"/>
<text transform="matrix(1 0 0.001 1.319 469.5 465.7)">4</text>
<text transform="matrix(1.064 0 0.001 1.319 481.04 465.7)">8</text>
</g>
<g fill="#00FF00" stroke="#00FF00">
<rect x="499.1" y="456.45" width="11.4" height="1.6"/>
<path d="M515.9 447.3H518.2V465.5H515.9V450.3Q514.9 451.2 512.9 451.4V450Q514.6 449.8 515.9 447.3Z"/>
<text transform="matrix(1.075 0 0.001 1.319 523.03 465.7)">9</text>
<text transform="matrix(1.075 0 0.001 1.319 535.03 465.7)">9</text>
<rect x="548.6" y="463" width="2.8" height="2.5"/>
<text transform="matrix(1.087 0 0.001 1.319 558.91 465.7)">6</text>
<text transform="matrix(1.099 0 0.001 1.319 570.9 465.7)">2</text>
</g>
<g fill="#00FF00" stroke="#00FF00">
<rect x="601.1" y="456.45" width="11.4" height="1.6"/>
<text transform="matrix(1.075 0 0.001 1.319 613.03 465.7)">9</text>
<text transform="matrix(1.099 0 0.001 1.319 624.9 465.7)">2</text>
<rect x="638.6" y="463" width="2.8" height="2.5"/>
<path d="M653.9 447.3H656.2V465.5H653.9V450.3Q652.9 451.2 650.9 451.4V450Q652.6 449.8 653.9 447.3Z"/>
<text transform="matrix(1.075 0 0.001 1.319 661.03 465.7)">9</text>
</g>
<g fill="#00FF00" stroke="#00FF00">
<rect x="699.1" y="456.45" width="11.4" height="1.6"/>
<text transform="matrix(1.064 0 0.001 1.319 711.04 465.7)">8</text>
<text transform="matrix(1.064 0 0.001 1.319 723.15 465.7)">3</text>
<text transform="matrix(1.064 0 0.001 1.319 735.15 465.7)">3</text>
<rect x="748.6" y="463" width="2.8" height="2.5"/>
<text transform="matrix(1.053 0 0.001 1.319 759.16 465.7)">0</text>
<text transform="matrix(1.075 0 0.001 1.319 771.03 465.7)">9</text>
</g>
<g fill="#00FF00" stroke="#00FF00">
<rect x="17.8" y="469.9" width="1.55" height="20.9"/>
<rect x="17.8" y="469.9" width="6" height="1.35"/>
<rect x="17.8" y="489.45" width="6" height="1.35"/>
<text transform="matrix(0.763 0 0.001 1.319 25.24 488.7)">G</text>
<text transform="matrix(0.935 0 0.001 1.319 36.5 488.7)">B</text>
<text transform="matrix(0.935 0 0.001 1.319 48.5 488.7)">P</text>
<text transform="matrix(0.787 0 0.001 1.319 61.21 488.7)">C</text>
<text transform="matrix(0.758 0 0.001 1.319 73.92 488.7)">A</text>
<text transform="matrix(0.84 0 0.001 1.319 84.66 488.7)">D</text>
<rect x="102.75" y="469.9" width="1.55" height="20.9"/>
<rect x="98.3" y="469.9" width="6" height="1.35"/>
<rect x="98.3" y="489.45" width="6" height="1.35"/>
</g>
<g fill="#00FF00" stroke="#00FF00">
<rect x="151.1" y="479.45" width="11.4" height="1.6"/>
<text transform="matrix(1.087 0 0.001 1.319 162.91 488.7)">6</text>
<text transform="matrix(1.075 0 0.001 1.319 175.03 488.7)">9</text>
<rect x="188.6" y="486" width="2.8" height="2.5"/>
<text transform="matrix(1.053 0 0.001 1.319 199.16 488.7)">5</text>
<text transform="matrix(1.064 0 0.001 1.319 211.04 488.7)">8</text>
</g>
<g fill="#00FF00" stroke="#00FF00">
<rect x="241.1" y="479.45" width="11.4" height="1.6"/>
<text transform="matrix(1.075 0 0.001 1.319 253.03 488.7)">9</text>
<text transform="matrix(1.053 0 0.001 1.319 265.16 488.7)">5</text>
<rect x="278.6" y="486" width="2.8" height="2.5"/>
<text transform="matrix(1.064 0 0.001 1.319 289.15 488.7)">3</text>
<path d="M305.9 470.3H308.2V488.5H305.9V473.3Q304.9 474.2 302.9 474.4V473Q304.6 472.8 305.9 470.3Z"/>
</g>
<g fill="#00FF00" stroke="#00FF00">
<rect x="319.1" y="479.45" width="11.4" height="1.6"/>
<path d="M335.9 470.3H338.2V488.5H335.9V473.3Q334.9 474.2 332.9 474.4V473Q334.6 472.8 335.9 470.3Z"/>
<text transform="matrix(1.099 0 0.001 1.319 342.9 488.7)">2</text>
<text transform="matrix(1 0 0.001 1.319 355.5 488.7)">4</text>
<rect x="368.6" y="486" width="2.8" height="2.5"/>
<text transform="matrix(1.099 0 0.001 1.319 378.9 488.7)">7</text>
<text transform="matrix(1.075 0 0.001 1.319 391.03 488.7)">9</text>
</g>
<g fill="#00FF00" stroke="#00FF00">
<rect x="409.1" y="479.45" width="11.4" height="1.6"/>
<path d="M425.9 470.3H428.2V488.5H425.9V473.3Q424.9 474.2 422.9 474.4V473Q424.6 472.8 425.9 470.3Z"/>
<text transform="matrix(1.099 0 0.001 1.319 432.9 488.7)">2</text>
<text transform="matrix(1.064 0 0.001 1.319 445.15 488.7)">3</text>
<rect x="458.6" y="486" width="2.8" height="2.5"/>
<text transform="matrix(1.099 0 0.001 1.319 468.9 488.7)">2</text>
<text transform="matrix(1.087 0 0.001 1.319 480.91 488.7)">6</text>
</g>
<g fill="#00FF00" stroke="#00FF00">
<text transform="matrix(1 0 0.001 1.319 535.5 488.7)">4</text>
<rect x="548.6" y="486" width="2.8" height="2.5"/>
<text transform="matrix(1.053 0 0.001 1.319 559.16 488.7)">5</text>
<text transform="matrix(1.087 0 0.001 1.319 570.91 488.7)">6</text>
</g>
<g fill="#00FF00" stroke="#00FF00">
<rect x="589.1" y="479.45" width="11.4" height="1.6"/>
<text transform="matrix(1 0 0.001 1.319 601.5 488.7)">4</text>
<text transform="matrix(1.099 0 0.001 1.319 612.9 488.7)">7</text>
<text transform="matrix(1.099 0 0.001 1.319 624.9 488.7)">7</text>
<rect x="638.6" y="486" width="2.8" height="2.5"/>
<text transform="matrix(1.053 0 0.001 1.319 649.16 488.7)">0</text>
<text transform="matrix(1.075 0 0.001 1.319 661.03 488.7)">9</text>
</g>
<g fill="#00FF00" stroke="#00FF00">
<rect x="699.1" y="479.45" width="11.4" height="1.6"/>
<text transform="matrix(1.064 0 0.001 1.319 711.04 488.7)">8</text>
<text transform="matrix(1.064 0 0.001 1.319 723.04 488.7)">8</text>
<text transform="matrix(1.053 0 0.001 1.319 735.16 488.7)">5</text>
<rect x="748.6" y="486" width="2.8" height="2.5"/>
<text transform="matrix(1 0 0.001 1.319 759.5 488.7)">4</text>
<text transform="matrix(1.099 0 0.001 1.319 770.9 488.7)">7</text>
</g>
<g fill="#00FF00" stroke="#00FF00">
<rect x="17.8" y="492.9" width="1.55" height="20.9"/>
<rect x="17.8" y="492.9" width="6" height="1.35"/>
<rect x="17.8" y="512.45" width="6" height="1.35"/>
<text transform="matrix(0.763 0 0.001 1.319 25.24 511.7)">G</text>
<text transform="matrix(0.935 0 0.001 1.319 36.5 511.7)">B</text>
<text transform="matrix(0.935 0 0.001 1.319 48.5 511.7)">P</text>
<path class="sk" fill="none" stroke="#00FF00" stroke-width="2" d="M70.5 493.3V506.95A3.65 3.55 0 0 1 63.2 506.95V503.9"/>
<text transform="matrix(0.935 0 0.001 1.319 72.5 511.7)">P</text>
<text transform="matrix(0.806 0 0.001 1.319 85.6 511.7)">Y</text>
<rect x="102.75" y="492.9" width="1.55" height="20.9"/>
<rect x="98.3" y="492.9" width="6" height="1.35"/>
<rect x="98.3" y="512.45" width="6" height="1.35"/>
</g>
<g fill="#00FF00" stroke="#00FF00">
<rect x="139.1" y="502.45" width="11.4" height="1.6"/>
<path d="M155.9 493.3H158.2V511.5H155.9V496.3Q154.9 497.2 152.9 497.4V496Q154.6 495.8 155.9 493.3Z"/>
<text transform="matrix(1.099 0 0.001 1.319 162.9 511.7)">2</text>
<text transform="matrix(1.099 0 0.001 1.319 174.9 511.7)">2</text>
<rect x="188.6" y="509" width="2.8" height="2.5"/>
<text transform="matrix(1.099 0 0.001 1.319 198.9 511.7)">2</text>
<text transform="matrix(1.087 0 0.001 1.319 210.91 511.7)">6</text>
</g>
<g fill="#00FF00" stroke="#00FF00">
<rect x="229.1" y="502.45" width="11.4" height="1.6"/>
<path d="M245.9 493.3H248.2V511.5H245.9V496.3Q244.9 497.2 242.9 497.4V496Q244.6 495.8 245.9 493.3Z"/>
<text transform="matrix(1.053 0 0.001 1.319 253.16 511.7)">5</text>
<text transform="matrix(1.099 0 0.001 1.319 264.9 511.7)">2</text>
<rect x="278.6" y="509" width="2.8" height="2.5"/>
<text transform="matrix(1.053 0 0.001 1.319 289.16 511.7)">5</text>
<text transform="matrix(1.099 0 0.001 1.319 300.9 511.7)">2</text>
</g>
<g fill="#00FF00" stroke="#00FF00">
<rect x="319.1" y="502.45" width="11.4" height="1.6"/>
<text transform="matrix(1.099 0 0.001 1.319 330.9 511.7)">2</text>
<text transform="matrix(1.053 0 0.001 1.319 343.16 511.7)">0</text>
<text transform="matrix(1.087 0 0.001 1.319 354.91 511.7)">6</text>
<rect x="368.6" y="509" width="2.8" height="2.5"/>
<path d="M383.9 493.3H386.2V511.5H383.9V496.3Q382.9 497.2 380.9 497.4V496Q382.6 495.8 383.9 493.3Z"/>
<path d="M395.9 493.3H398.2V511.5H395.9V496.3Q394.9 497.2 392.9 497.4V496Q394.6 495.8 395.9 493.3Z"/>
</g>
<g fill="#00FF00" stroke="#00FF00">
<rect x="409.1" y="502.45" width="11.4" height="1.6"/>
<text transform="matrix(1.099 0 0.001 1.319 420.9 511.7)">2</text>
<text transform="matrix(1.087 0 0.001 1.319 432.91 511.7)">6</text>
<text transform="matrix(1.053 0 0.001 1.319 445.16 511.7)">5</text>
<rect x="458.6" y="509" width="2.8" height="2.5"/>
<text transform="matrix(1.064 0 0.001 1.319 469.04 511.7)">8</text>
<text transform="matrix(1 0 0.001 1.319 481.5 511.7)">4</text>
</g>
<g fill="#00FF00" stroke="#00FF00">
<rect x="499.1" y="502.45" width="11.4" height="1.6"/>
<path d="M515.9 493.3H518.2V511.5H515.9V496.3Q514.9 497.2 512.9 497.4V496Q514.6 495.8 515.9 493.3Z"/>
<text transform="matrix(1.099 0 0.001 1.319 522.9 511.7)">7</text>
<text transform="matrix(1.075 0 0.001 1.319 535.03 511.7)">9</text>
<rect x="548.6" y="509" width="2.8" height="2.5"/>
<text transform="matrix(1.053 0 0.001 1.319 559.16 511.7)">5</text>
<text transform="matrix(1.064 0 0.001 1.319 571.15 511.7)">3</text>
</g>
<g fill="#00FF00" stroke="#00FF00">
<rect x="601.1" y="502.45" width="11.4" height="1.6"/>
<text transform="matrix(1.064 0 0.001 1.319 613.15 511.7)">3</text>
<text transform="matrix(1.087 0 0.001 1.319 624.91 511.7)">6</text>
<rect x="638.6" y="509" width="2.8" height="2.5"/>
<path d="M653.9 493.3H656.2V511.5H653.9V496.3Q652.9 497.2 650.9 497.4V496Q652.6 495.8 653.9 493.3Z"/>
<text transform="matrix(1.053 0 0.001 1.319 661.16 511.7)">0</text>
</g>
<g fill="#00FF00" stroke="#00FF00">
<rect x="699.1" y="502.45" width="11.4" height="1.6"/>
<text transform="matrix(1.075 0 0.001 1.319 711.03 511.7)">9</text>
<text transform="matrix(1.087 0 0.001 1.319 722.91 511.7)">6</text>
<text transform="matrix(1.099 0 0.001 1.319 734.9 511.7)">2</text>
<rect x="748.6" y="509" width="2.8" height="2.5"/>
<text transform="matrix(1.064 0 0.001 1.319 759.15 511.7)">3</text>
<text transform="matrix(1.099 0 0.001 1.319 770.9 511.7)">7</text>
</g>
<g fill="#00FF00" stroke="#00FF00">
<rect x="17.8" y="515.9" width="1.55" height="20.9"/>
<rect x="17.8" y="515.9" width="6" height="1.35"/>
<rect x="17.8" y="535.45" width="6" height="1.35"/>
<text transform="matrix(0.763 0 0.001 1.319 25.24 534.7)">G</text>
<text transform="matrix(0.935 0 0.001 1.319 36.5 534.7)">B</text>
<text transform="matrix(0.935 0 0.001 1.319 48.5 534.7)">P</text>
<text transform="matrix(0.893 0 0.001 1.319 60.57 534.7)">N</text>
<text transform="matrix(0.909 0 0.001 1.319 73.45 534.7)">Z</text>
<text transform="matrix(0.84 0 0.001 1.319 84.66 534.7)">D</text>
<rect x="102.75" y="515.9" width="1.55" height="20.9"/>
<rect x="98.3" y="515.9" width="6" height="1.35"/>
<rect x="98.3" y="535.45" width="6" height="1.35"/>
</g>
<g fill="#00FF00" stroke="#00FF00">
<rect x="151.1" y="525.45" width="11.4" height="1.6"/>
<path d="M167.9 516.3H170.2V534.5H167.9V519.3Q166.9 520.2 164.9 520.4V519Q166.6 518.8 167.9 516.3Z"/>
<text transform="matrix(1.099 0 0.001 1.319 174.9 534.7)">2</text>
<rect x="188.6" y="532" width="2.8" height="2.5"/>
<path d="M203.9 516.3H206.2V534.5H203.9V519.3Q202.9 520.2 200.9 520.4V519Q202.6 518.8 203.9 516.3Z"/>
<text transform="matrix(1.053 0 0.001 1.319 211.16 534.7)">5</text>
</g>
<g fill="#00FF00" stroke="#00FF00">
<rect x="241.1" y="525.45" width="11.4" height="1.6"/>
<path d="M257.9 516.3H260.2V534.5H257.9V519.3Q256.9 520.2 254.9 520.4V519Q256.6 518.8 257.9 516.3Z"/>
<text transform="matrix(1.099 0 0.001 1.319 264.9 534.7)">2</text>
<rect x="278.6" y="532" width="2.8" height="2.5"/>
<text transform="matrix(1.075 0 0.001 1.319 289.03 534.7)">9</text>
<text transform="matrix(1.053 0 0.001 1.319 301.16 534.7)">0</text>
</g>
<g fill="#00FF00" stroke="#00FF00">
<rect x="319.1" y="525.45" width="11.4" height="1.6"/>
<path d="M335.9 516.3H338.2V534.5H335.9V519.3Q334.9 520.2 332.9 520.4V519Q334.6 518.8 335.9 516.3Z"/>
<text transform="matrix(1.053 0 0.001 1.319 343.16 534.7)">0</text>
<text transform="matrix(1.053 0 0.001 1.319 355.16 534.7)">5</text>
<rect x="368.6" y="532" width="2.8" height="2.5"/>
<text transform="matrix(1.075 0 0.001 1.319 379.03 534.7)">9</text>
<path d="M395.9 516.3H398.2V534.5H395.9V519.3Q394.9 520.2 392.9 520.4V519Q394.6 518.8 395.9 516.3Z"/>
</g>
<g fill="#00FF00" stroke="#00FF00">
<rect x="409.1" y="525.45" width="11.4" height="1.6"/>
<text transform="matrix(1.099 0 0.001 1.319 420.9 534.7)">2</text>
<text transform="matrix(1.099 0 0.001 1.319 432.9 534.7)">2</text>
<text transform="matrix(1.053 0 0.001 1.319 445.16 534.7)">0</text>
<rect x="458.6" y="532" width="2.8" height="2.5"/>
<text transform="matrix(1.099 0 0.001 1.319 468.9 534.7)">2</text>
<path d="M485.9 516.3H488.2V534.5H485.9V519.3Q484.9 520.2 482.9 520.4V519Q484.6 518.8 485.9 516.3Z"/>
</g>
<g fill="#00FF00" stroke="#00FF00">
<rect x="499.1" y="525.45" width="11.4" height="1.6"/>
<text transform="matrix(1.064 0 0.001 1.319 511.15 534.7)">3</text>
<text transform="matrix(1.053 0 0.001 1.319 523.16 534.7)">5</text>
<text transform="matrix(1.064 0 0.001 1.319 535.15 534.7)">3</text>
<rect x="548.6" y="532" width="2.8" height="2.5"/>
<text transform="matrix(1.064 0 0.001 1.319 559.04 534.7)">8</text>
<text transform="matrix(1.075 0 0.001 1.319 571.03 534.7)">9</text>
</g>
<g fill="#00FF00" stroke="#00FF00">
<rect x="589.1" y="525.45" width="11.4" height="1.6"/>
<text transform="matrix(1.064 0 0.001 1.319 601.15 534.7)">3</text>
<text transform="matrix(1.053 0 0.001 1.319 613.16 534.7)">5</text>
<text transform="matrix(1.087 0 0.001 1.319 624.91 534.7)">6</text>
<rect x="638.6" y="532" width="2.8" height="2.5"/>
<text transform="matrix(1.053 0 0.001 1.319 649.16 534.7)">0</text>
<text transform="matrix(1 0 0.001 1.319 661.5 534.7)">4</text>
</g>
<g fill="#00FF00" stroke="#00FF00">
<rect x="687.1" y="525.45" width="11.4" height="1.6"/>
<path d="M703.9 516.3H706.2V534.5H703.9V519.3Q702.9 520.2 700.9 520.4V519Q702.6 518.8 703.9 516.3Z"/>
<text transform="matrix(1.053 0 0.001 1.319 711.16 534.7)">0</text>
<text transform="matrix(1.087 0 0.001 1.319 722.91 534.7)">6</text>
<path d="M739.9 516.3H742.2V534.5H739.9V519.3Q738.9 520.2 736.9 520.4V519Q738.6 518.8 739.9 516.3Z"/>
<rect x="748.6" y="532" width="2.8" height="2.5"/>
<path d="M763.9 516.3H766.2V534.5H763.9V519.3Q762.9 520.2 760.9 520.4V519Q762.6 518.8 763.9 516.3Z"/>
<text transform="matrix(1.053 0 0.001 1.319 771.16 534.7)">0</text>
</g>
<g fill="#00FF00" stroke="#00FF00">
<rect x="17.8" y="538.9" width="1.55" height="20.9"/>
<rect x="17.8" y="538.9" width="6" height="1.35"/>
<rect x="17.8" y="558.45" width="6" height="1.35"/>
<text transform="matrix(0.763 0 0.001 1.319 25.24 557.7)">G</text>
<text transform="matrix(0.935 0 0.001 1.319 36.5 557.7)">B</text>
<text transform="matrix(0.935 0 0.001 1.319 48.5 557.7)">P</text>
<text transform="matrix(0.877 0 0.001 1.319 60.68 557.7)">U</text>
<text transform="matrix(0.87 0 0.001 1.319 73.22 557.7)">S</text>
<text transform="matrix(0.84 0 0.001 1.319 84.66 557.7)">D</text>
<rect x="102.75" y="538.9" width="1.55" height="20.9"/>
<rect x="98.3" y="538.9" width="6" height="1.35"/>
<rect x="98.3" y="558.45" width="6" height="1.35"/>
</g>
<g fill="#00FF00" stroke="#00FF00">
<rect x="151.1" y="548.45" width="11.4" height="1.6"/>
<text transform="matrix(1.075 0 0.001 1.319 163.03 557.7)">9</text>
<text transform="matrix(1 0 0.001 1.319 175.5 557.7)">4</text>
<rect x="188.6" y="555" width="2.8" height="2.5"/>
<text transform="matrix(1.064 0 0.001 1.319 199.04 557.7)">8</text>
<text transform="matrix(1.053 0 0.001 1.319 211.16 557.7)">0</text>
</g>
<g fill="#00FF00" stroke="#00FF00">
<rect x="229.1" y="548.45" width="11.4" height="1.6"/>
<path d="M245.9 539.3H248.2V557.5H245.9V542.3Q244.9 543.2 242.9 543.4V542Q244.6 541.8 245.9 539.3Z"/>
<text transform="matrix(1.053 0 0.001 1.319 253.16 557.7)">5</text>
<text transform="matrix(1.053 0 0.001 1.319 265.16 557.7)">0</text>
<rect x="278.6" y="555" width="2.8" height="2.5"/>
<text transform="matrix(1.053 0 0.001 1.319 289.16 557.7)">0</text>
<text transform="matrix(1.087 0 0.001 1.319 300.91 557.7)">6</text>
</g>
<g fill="#00FF00" stroke="#00FF00">
<rect x="319.1" y="548.45" width="11.4" height="1.6"/>
<text transform="matrix(1.099 0 0.001 1.319 330.9 557.7)">2</text>
<text transform="matrix(1.053 0 0.001 1.319 343.16 557.7)">0</text>
<path d="M359.9 539.3H362.2V557.5H359.9V542.3Q358.9 543.2 356.9 543.4V542Q358.6 541.8 359.9 539.3Z"/>
<rect x="368.6" y="555" width="2.8" height="2.5"/>
<text transform="matrix(1.053 0 0.001 1.319 379.16 557.7)">0</text>
<text transform="matrix(1.099 0 0.001 1.319 390.9 557.7)">7</text>
</g>
<g fill="#00FF00" stroke="#00FF00">
<rect x="409.1" y="548.45" width="11.4" height="1.6"/>
<text transform="matrix(1.099 0 0.001 1.319 420.9 557.7)">2</text>
<text transform="matrix(1.064 0 0.001 1.319 433.15 557.7)">3</text>
<text transform="matrix(1.064 0 0.001 1.319 445.15 557.7)">3</text>
<rect x="458.6" y="555" width="2.8" height="2.5"/>
<text transform="matrix(1.064 0 0.001 1.319 469.15 557.7)">3</text>
<text transform="matrix(1.064 0 0.001 1.319 481.04 557.7)">8</text>
</g>
<g fill="#00FF00" stroke="#00FF00">
<rect x="511.1" y="548.45" width="11.4" height="1.6"/>
<text transform="matrix(1.075 0 0.001 1.319 523.03 557.7)">9</text>
<text transform="matrix(1.053 0 0.001 1.319 535.16 557.7)">5</text>
<rect x="548.6" y="555" width="2.8" height="2.5"/>
<text transform="matrix(1.064 0 0.001 1.319 559.15 557.7)">3</text>
<text transform="matrix(1.099 0 0.001 1.319 570.9 557.7)">7</text>
</g>
<g fill="#00FF00" stroke="#00FF00">
<rect x="589.1" y="548.45" width="11.4" height="1.6"/>
<text transform="matrix(1.053 0 0.001 1.319 601.16 557.7)">5</text>
<text transform="matrix(1.064 0 0.001 1.319 613.15 557.7)">3</text>
<text transform="matrix(1.053 0 0.001 1.319 625.16 557.7)">5</text>
<rect x="638.6" y="555" width="2.8" height="2.5"/>
<text transform="matrix(1.064 0 0.001 1.319 649.15 557.7)">3</text>
<text transform="matrix(1.053 0 0.001 1.319 661.16 557.7)">5</text>
</g>
<g fill="#00FF00" stroke="#00FF00">
<rect x="687.1" y="548.45" width="11.4" height="1.6"/>
<path d="M703.9 539.3H706.2V557.5H703.9V542.3Q702.9 543.2 700.9 543.4V542Q702.6 541.8 703.9 539.3Z"/>
<text transform="matrix(1.064 0 0.001 1.319 711.15 557.7)">3</text>
<path d="M727.9 539.3H730.2V557.5H727.9V542.3Q726.9 543.2 724.9 543.4V542Q726.6 541.8 727.9 539.3Z"/>
<text transform="matrix(1.053 0 0.001 1.319 735.16 557.7)">0</text>
<rect x="748.6" y="555" width="2.8" height="2.5"/>
<text transform="matrix(1.053 0 0.001 1.319 759.16 557.7)">0</text>
<text transform="matrix(1.064 0 0.001 1.319 771.15 557.7)">3</text>
</g>
<g fill="#00FF00" stroke="#00FF00">
<rect x="17.8" y="561.9" width="1.55" height="20.9"/>
<rect x="17.8" y="561.9" width="6" height="1.35"/>
<rect x="17.8" y="581.45" width="6" height="1.35"/>
<rect x="26" y="562.3" width="2.4" height="18.4"/>
<rect x="26.1" y="562.3" width="9.9" height="1.95"/>
<rect x="26.1" y="569.75" width="9" height="1.95"/>
<rect x="26.1" y="578.75" width="9.9" height="1.95"/>
<text transform="matrix(0.877 0 0.001 1.319 36.68 580.7)">U</text>
<text transform="matrix(0.84 0 0.001 1.319 48.66 580.7)">R</text>
<text transform="matrix(0.787 0 0.001 1.319 61.21 580.7)">C</text>
<rect x="73.95" y="562.3" width="2.45" height="18.4"/>
<rect x="81.75" y="562.3" width="2.45" height="18.4"/>
<rect x="74.05" y="569.65" width="10.1" height="1.95"/>
<rect x="85.95" y="562.3" width="2.45" height="18.4"/>
<rect x="86" y="562.3" width="10" height="1.95"/>
<rect x="86" y="569.75" width="8.2" height="1.95"/>
<rect x="102.75" y="561.9" width="1.55" height="20.9"/>
<rect x="98.3" y="561.9" width="6" height="1.35"/>
<rect x="98.3" y="581.45" width="6" height="1.35"/>
</g>
<g fill="#FFFF00" stroke="#FFFF00">
<rect x="139.1" y="571.45" width="11.4" height="1.6"/>
<path d="M155.9 562.3H158.2V580.5H155.9V565.3Q154.9 566.2 152.9 566.4V565Q154.6 564.8 155.9 562.3Z"/>
<text transform="matrix(1 0 0.001 1.319 163.5 580.7)">4</text>
<text transform="matrix(1.064 0 0.001 1.319 175.15 580.7)">3</text>
<rect x="188.6" y="578" width="2.8" height="2.5"/>
<text transform="matrix(1.099 0 0.001 1.319 198.9 580.7)">7</text>
<text transform="matrix(1.064 0 0.001 1.319 211.04 580.7)">8</text>
</g>
<g fill="#00FF00" stroke="#00FF00">
<rect x="229.1" y="571.45" width="11.4" height="1.6"/>
<text transform="matrix(1.099 0 0.001 1.319 240.9 580.7)">2</text>
<path d="M257.9 562.3H260.2V580.5H257.9V565.3Q256.9 566.2 254.9 566.4V565Q256.6 564.8 257.9 562.3Z"/>
<text transform="matrix(1.099 0 0.001 1.319 264.9 580.7)">2</text>
<rect x="278.6" y="578" width="2.8" height="2.5"/>
<text transform="matrix(1 0 0.001 1.319 289.5 580.7)">4</text>
<text transform="matrix(1.053 0 0.001 1.319 301.16 580.7)">5</text>
</g>
<g fill="#FFFF00" stroke="#FFFF00">
<rect x="319.1" y="571.45" width="11.4" height="1.6"/>
<text transform="matrix(1.099 0 0.001 1.319 330.9 580.7)">2</text>
<text transform="matrix(1 0 0.001 1.319 343.5 580.7)">4</text>
<text transform="matrix(1.099 0 0.001 1.319 354.9 580.7)">7</text>
<rect x="368.6" y="578" width="2.8" height="2.5"/>
<text transform="matrix(1.053 0 0.001 1.319 379.16 580.7)">0</text>
<text transform="matrix(1.053 0 0.001 1.319 391.16 580.7)">0</text>
</g>
<g fill="#00FF00" stroke="#00FF00">
<rect x="409.1" y="571.45" width="11.4" height="1.6"/>
<text transform="matrix(1.099 0 0.001 1.319 420.9 580.7)">2</text>
<text transform="matrix(1.064 0 0.001 1.319 433.04 580.7)">8</text>
<path d="M449.9 562.3H452.2V580.5H449.9V565.3Q448.9 566.2 446.9 566.4V565Q448.6 564.8 449.9 562.3Z"/>
<rect x="458.6" y="578" width="2.8" height="2.5"/>
<text transform="matrix(1.099 0 0.001 1.319 468.9 580.7)">7</text>
<text transform="matrix(1.064 0 0.001 1.319 481.15 580.7)">3</text>
</g>
<g fill="#00FF00" stroke="#00FF00">
<rect x="499.1" y="571.45" width="11.4" height="1.6"/>
<text transform="matrix(1.053 0 0.001 1.319 511.16 580.7)">5</text>
<text transform="matrix(1.064 0 0.001 1.319 523.15 580.7)">3</text>
<text transform="matrix(1.064 0 0.001 1.319 535.15 580.7)">3</text>
<rect x="548.6" y="578" width="2.8" height="2.5"/>
<text transform="matrix(1.087 0 0.001 1.319 558.91 580.7)">6</text>
<text transform="matrix(1.064 0 0.001 1.319 571.15 580.7)">3</text>
</g>
<g fill="#00FF00" stroke="#00FF00">
<rect x="589.1" y="571.45" width="11.4" height="1.6"/>
<text transform="matrix(1.099 0 0.001 1.319 600.9 580.7)">7</text>
<text transform="matrix(1.053 0 0.001 1.319 613.16 580.7)">0</text>
<path d="M629.9 562.3H632.2V580.5H629.9V565.3Q628.9 566.2 626.9 566.4V565Q628.6 564.8 629.9 562.3Z"/>
<rect x="638.6" y="578" width="2.8" height="2.5"/>
<text transform="matrix(1.053 0 0.001 1.319 649.16 580.7)">0</text>
<text transform="matrix(1.064 0 0.001 1.319 661.15 580.7)">3</text>
</g>
<g fill="#00FF00" stroke="#00FF00">
<rect x="687.1" y="571.45" width="11.4" height="1.6"/>
<text transform="matrix(1.099 0 0.001 1.319 698.9 580.7)">2</text>
<path d="M715.9 562.3H718.2V580.5H715.9V565.3Q714.9 566.2 712.9 566.4V565Q714.6 564.8 715.9 562.3Z"/>
<path d="M727.9 562.3H730.2V580.5H727.9V565.3Q726.9 566.2 724.9 566.4V565Q726.6 564.8 727.9 562.3Z"/>
<text transform="matrix(1.075 0 0.001 1.319 735.03 580.7)">9</text>
<rect x="748.6" y="578" width="2.8" height="2.5"/>
<text transform="matrix(1.087 0 0.001 1.319 758.91 580.7)">6</text>
<text transform="matrix(1.099 0 0.001 1.319 770.9 580.7)">2</text>
</g>
<g fill="#00FF00" stroke="#00FF00">
<rect x="17.8" y="584.9" width="1.55" height="20.9"/>
<rect x="17.8" y="584.9" width="6" height="1.35"/>
<rect x="17.8" y="604.45" width="6" height="1.35"/>
<text transform="matrix(0.877 0 0.001 1.319 24.68 603.7)">U</text>
<text transform="matrix(0.87 0 0.001 1.319 37.22 603.7)">S</text>
<text transform="matrix(0.84 0 0.001 1.319 48.66 603.7)">D</text>
<text transform="matrix(0.787 0 0.001 1.319 61.21 603.7)">C</text>
<rect x="73.95" y="585.3" width="2.45" height="18.4"/>
<rect x="81.75" y="585.3" width="2.45" height="18.4"/>
<rect x="74.05" y="592.65" width="10.1" height="1.95"/>
<rect x="85.95" y="585.3" width="2.45" height="18.4"/>
<rect x="86" y="585.3" width="10" height="1.95"/>
<rect x="86" y="592.75" width="8.2" height="1.95"/>
<rect x="102.75" y="584.9" width="1.55" height="20.9"/>
<rect x="98.3" y="584.9" width="6" height="1.35"/>
<rect x="98.3" y="604.45" width="6" height="1.35"/>
</g>
<g fill="#00FF00" stroke="#00FF00">
<rect x="151.1" y="594.45" width="11.4" height="1.6"/>
<text transform="matrix(1.075 0 0.001 1.319 163.03 603.7)">9</text>
<text transform="matrix(1.099 0 0.001 1.319 174.9 603.7)">2</text>
<rect x="188.6" y="601" width="2.8" height="2.5"/>
<text transform="matrix(1.064 0 0.001 1.319 199.04 603.7)">8</text>
<text transform="matrix(1.087 0 0.001 1.319 210.91 603.7)">6</text>
</g>
<g fill="#00FF00" stroke="#00FF00">
<rect x="229.1" y="594.45" width="11.4" height="1.6"/>
<path d="M245.9 585.3H248.2V603.5H245.9V588.3Q244.9 589.2 242.9 589.4V588Q244.6 587.8 245.9 585.3Z"/>
<path d="M257.9 585.3H260.2V603.5H257.9V588.3Q256.9 589.2 254.9 589.4V588Q256.6 587.8 257.9 585.3Z"/>
<text transform="matrix(1 0 0.001 1.319 265.5 603.7)">4</text>
<rect x="278.6" y="601" width="2.8" height="2.5"/>
<text transform="matrix(1 0 0.001 1.319 289.5 603.7)">4</text>
<text transform="matrix(1.064 0 0.001 1.319 301.15 603.7)">3</text>
</g>
<g fill="#00FF00" stroke="#00FF00">
<rect x="319.1" y="594.45" width="11.4" height="1.6"/>
<path d="M335.9 585.3H338.2V603.5H335.9V588.3Q334.9 589.2 332.9 589.4V588Q334.6 587.8 335.9 585.3Z"/>
<text transform="matrix(1.064 0 0.001 1.319 343.15 603.7)">3</text>
<text transform="matrix(1.075 0 0.001 1.319 355.03 603.7)">9</text>
<rect x="368.6" y="601" width="2.8" height="2.5"/>
<path d="M383.9 585.3H386.2V603.5H383.9V588.3Q382.9 589.2 380.9 589.4V588Q382.6 587.8 383.9 585.3Z"/>
<text transform="matrix(1.064 0 0.001 1.319 391.04 603.7)">8</text>
</g>
<g fill="#00FF00" stroke="#00FF00">
<rect x="409.1" y="594.45" width="11.4" height="1.6"/>
<text transform="matrix(1.099 0 0.001 1.319 420.9 603.7)">2</text>
<text transform="matrix(1.053 0 0.001 1.319 433.16 603.7)">0</text>
<text transform="matrix(1.053 0 0.001 1.319 445.16 603.7)">5</text>
<rect x="458.6" y="601" width="2.8" height="2.5"/>
<text transform="matrix(1.075 0 0.001 1.319 469.03 603.7)">9</text>
<text transform="matrix(1 0 0.001 1.319 481.5 603.7)">4</text>
</g>
<g fill="#00FF00" stroke="#00FF00">
<rect x="499.1" y="594.45" width="11.4" height="1.6"/>
<text transform="matrix(1.099 0 0.001 1.319 510.9 603.7)">7</text>
<text transform="matrix(1 0 0.001 1.319 523.5 603.7)">4</text>
<text transform="matrix(1.053 0 0.001 1.319 535.16 603.7)">5</text>
<rect x="548.6" y="601" width="2.8" height="2.5"/>
<text transform="matrix(1.064 0 0.001 1.319 559.04 603.7)">8</text>
<text transform="matrix(1.064 0 0.001 1.319 571.04 603.7)">8</text>
</g>
<g fill="#00FF00" stroke="#00FF00">
<rect x="589.1" y="594.45" width="11.4" height="1.6"/>
<text transform="matrix(1.064 0 0.001 1.319 601.04 603.7)">8</text>
<text transform="matrix(1.064 0 0.001 1.319 613.15 603.7)">3</text>
<text transform="matrix(1 0 0.001 1.319 625.5 603.7)">4</text>
<rect x="638.6" y="601" width="2.8" height="2.5"/>
<text transform="matrix(1.064 0 0.001 1.319 649.15 603.7)">3</text>
<text transform="matrix(1.053 0 0.001 1.319 661.16 603.7)">5</text>
</g>
<g fill="#00FF00" stroke="#00FF00">
<rect x="687.1" y="594.45" width="11.4" height="1.6"/>
<text transform="matrix(1.099 0 0.001 1.319 698.9 603.7)">2</text>
<path d="M715.9 585.3H718.2V603.5H715.9V588.3Q714.9 589.2 712.9 589.4V588Q714.6 587.8 715.9 585.3Z"/>
<text transform="matrix(1.064 0 0.001 1.319 723.15 603.7)">3</text>
<text transform="matrix(1.099 0 0.001 1.319 734.9 603.7)">2</text>
<rect x="748.6" y="601" width="2.8" height="2.5"/>
<text transform="matrix(1.087 0 0.001 1.319 758.91 603.7)">6</text>
<text transform="matrix(1 0 0.001 1.319 771.5 603.7)">4</text>
</g>
<g fill="#00FF00" stroke="#00FF00">
<rect x="17.8" y="607.9" width="1.55" height="20.9"/>
<rect x="17.8" y="607.9" width="6" height="1.35"/>
<rect x="17.8" y="627.45" width="6" height="1.35"/>
<text transform="matrix(0.893 0 0.001 1.319 24.57 626.7)">N</text>
<text transform="matrix(0.909 0 0.001 1.319 37.45 626.7)">Z</text>
<text transform="matrix(0.84 0 0.001 1.319 48.66 626.7)">D</text>
<text transform="matrix(0.787 0 0.001 1.319 61.21 626.7)">C</text>
<rect x="73.95" y="608.3" width="2.45" height="18.4"/>
<rect x="81.75" y="608.3" width="2.45" height="18.4"/>
<rect x="74.05" y="615.65" width="10.1" height="1.95"/>
<rect x="85.95" y="608.3" width="2.45" height="18.4"/>
<rect x="86" y="608.3" width="10" height="1.95"/>
<rect x="86" y="615.75" width="8.2" height="1.95"/>
<rect x="102.75" y="607.9" width="1.55" height="20.9"/>
<rect x="98.3" y="607.9" width="6" height="1.35"/>
<rect x="98.3" y="627.45" width="6" height="1.35"/>
</g>
<g fill="#FFA500" stroke="#FFA500">
<rect x="139.1" y="617.45" width="11.4" height="1.6"/>
<path d="M155.9 608.3H158.2V626.5H155.9V611.3Q154.9 612.2 152.9 612.4V611Q154.6 610.8 155.9 608.3Z"/>
<text transform="matrix(1.099 0 0.001 1.319 162.9 626.7)">7</text>
<text transform="matrix(1.064 0 0.001 1.319 175.15 626.7)">3</text>
<rect x="188.6" y="624" width="2.8" height="2.5"/>
<text transform="matrix(1.099 0 0.001 1.319 198.9 626.7)">2</text>
<text transform="matrix(1.064 0 0.001 1.319 211.04 626.7)">8</text>
</g>
<g fill="#FFA500" stroke="#FFA500">
<rect x="229.1" y="617.45" width="11.4" height="1.6"/>
<text transform="matrix(1.099 0 0.001 1.319 240.9 626.7)">2</text>
<text transform="matrix(1 0 0.001 1.319 253.5 626.7)">4</text>
<text transform="matrix(1.099 0 0.001 1.319 264.9 626.7)">7</text>
<rect x="278.6" y="624" width="2.8" height="2.5"/>
<text transform="matrix(1 0 0.001 1.319 289.5 626.7)">4</text>
<text transform="matrix(1.053 0 0.001 1.319 301.16 626.7)">0</text>
</g>
<g fill="#00FF00" stroke="#00FF00">
<rect x="319.1" y="617.45" width="11.4" height="1.6"/>
<text transform="matrix(1.099 0 0.001 1.319 330.9 626.7)">2</text>
<text transform="matrix(1.099 0 0.001 1.319 342.9 626.7)">2</text>
<text transform="matrix(1 0 0.001 1.319 355.5 626.7)">4</text>
<rect x="368.6" y="624" width="2.8" height="2.5"/>
<text transform="matrix(1.053 0 0.001 1.319 379.16 626.7)">5</text>
<path d="M395.9 608.3H398.2V626.5H395.9V611.3Q394.9 612.2 392.9 612.4V611Q394.6 610.8 395.9 608.3Z"/>
</g>
<g fill="#00FF00" stroke="#00FF00">
<rect x="409.1" y="617.45" width="11.4" height="1.6"/>
<text transform="matrix(1.099 0 0.001 1.319 420.9 626.7)">2</text>
<text transform="matrix(1.053 0 0.001 1.319 433.16 626.7)">0</text>
<text transform="matrix(1.053 0 0.001 1.319 445.16 626.7)">5</text>
<rect x="458.6" y="624" width="2.8" height="2.5"/>
<text transform="matrix(1.099 0 0.001 1.319 468.9 626.7)">7</text>
<text transform="matrix(1.099 0 0.001 1.319 480.9 626.7)">2</text>
</g>
<g fill="#00FF00" stroke="#00FF00">
<rect x="499.1" y="617.45" width="11.4" height="1.6"/>
<text transform="matrix(1 0 0.001 1.319 511.5 626.7)">4</text>
<text transform="matrix(1.087 0 0.001 1.319 522.91 626.7)">6</text>
<text transform="matrix(1.087 0 0.001 1.319 534.91 626.7)">6</text>
<rect x="548.6" y="624" width="2.8" height="2.5"/>
<text transform="matrix(1 0 0.001 1.319 559.5 626.7)">4</text>
<text transform="matrix(1.075 0 0.001 1.319 571.03 626.7)">9</text>
</g>
<g fill="#FFFF00" stroke="#FFFF00">
<rect x="589.1" y="617.45" width="11.4" height="1.6"/>
<text transform="matrix(1.064 0 0.001 1.319 601.04 626.7)">8</text>
<text transform="matrix(1.075 0 0.001 1.319 613.03 626.7)">9</text>
<text transform="matrix(1 0 0.001 1.319 625.5 626.7)">4</text>
<rect x="638.6" y="624" width="2.8" height="2.5"/>
<text transform="matrix(1.099 0 0.001 1.319 648.9 626.7)">2</text>
<text transform="matrix(1 0 0.001 1.319 661.5 626.7)">4</text>
</g>
<g fill="#00FF00" stroke="#00FF00">
<rect x="687.1" y="617.45" width="11.4" height="1.6"/>
<text transform="matrix(1.099 0 0.001 1.319 698.9 626.7)">2</text>
<text transform="matrix(1.099 0 0.001 1.319 710.9 626.7)">2</text>
<path d="M727.9 608.3H730.2V626.5H727.9V611.3Q726.9 612.2 724.9 612.4V611Q726.6 610.8 727.9 608.3Z"/>
<path d="M739.9 608.3H742.2V626.5H739.9V611.3Q738.9 612.2 736.9 612.4V611Q738.6 610.8 739.9 608.3Z"/>
<rect x="748.6" y="624" width="2.8" height="2.5"/>
<text transform="matrix(1.087 0 0.001 1.319 758.91 626.7)">6</text>
<text transform="matrix(1 0 0.001 1.319 771.5 626.7)">4</text>
</g>
<g fill="#00FF00" stroke="#00FF00">
<rect x="17.8" y="630.9" width="1.55" height="20.9"/>
<rect x="17.8" y="630.9" width="6" height="1.35"/>
<rect x="17.8" y="650.45" width="6" height="1.35"/>
<text transform="matrix(0.787 0 0.001 1.319 25.21 649.7)">C</text>
<text transform="matrix(0.758 0 0.001 1.319 37.92 649.7)">A</text>
<text transform="matrix(0.84 0 0.001 1.319 48.66 649.7)">D</text>
<text transform="matrix(0.787 0 0.001 1.319 61.21 649.7)">C</text>
<rect x="73.95" y="631.3" width="2.45" height="18.4"/>
<rect x="81.75" y="631.3" width="2.45" height="18.4"/>
<rect x="74.05" y="638.65" width="10.1" height="1.95"/>
<rect x="85.95" y="631.3" width="2.45" height="18.4"/>
<rect x="86" y="631.3" width="10" height="1.95"/>
<rect x="86" y="638.75" width="8.2" height="1.95"/>
<rect x="102.75" y="630.9" width="1.55" height="20.9"/>
<rect x="98.3" y="630.9" width="6" height="1.35"/>
<rect x="98.3" y="650.45" width="6" height="1.35"/>
</g>
<g fill="#00FF00" stroke="#00FF00">
<rect x="139.1" y="640.45" width="11.4" height="1.6"/>
<path d="M155.9 631.3H158.2V649.5H155.9V634.3Q154.9 635.2 152.9 635.4V634Q154.6 633.8 155.9 631.3Z"/>
<path d="M167.9 631.3H170.2V649.5H167.9V634.3Q166.9 635.2 164.9 635.4V634Q166.6 633.8 167.9 631.3Z"/>
<text transform="matrix(1 0 0.001 1.319 175.5 649.7)">4</text>
<rect x="188.6" y="647" width="2.8" height="2.5"/>
<text transform="matrix(1.099 0 0.001 1.319 198.9 649.7)">7</text>
<text transform="matrix(1.087 0 0.001 1.319 210.91 649.7)">6</text>
</g>
<g fill="#00FF00" stroke="#00FF00">
<rect x="229.1" y="640.45" width="11.4" height="1.6"/>
<path d="M245.9 631.3H248.2V649.5H245.9V634.3Q244.9 635.2 242.9 635.4V634Q244.6 633.8 245.9 631.3Z"/>
<text transform="matrix(1.087 0 0.001 1.319 252.91 649.7)">6</text>
<text transform="matrix(1.053 0 0.001 1.319 265.16 649.7)">5</text>
<rect x="278.6" y="647" width="2.8" height="2.5"/>
<text transform="matrix(1.064 0 0.001 1.319 289.15 649.7)">3</text>
<text transform="matrix(1.099 0 0.001 1.319 300.9 649.7)">7</text>
</g>
<g fill="#00FF00" stroke="#00FF00">
<rect x="319.1" y="640.45" width="11.4" height="1.6"/>
<text transform="matrix(1.099 0 0.001 1.319 330.9 649.7)">2</text>
<text transform="matrix(1.053 0 0.001 1.319 343.16 649.7)">0</text>
<text transform="matrix(1.099 0 0.001 1.319 354.9 649.7)">7</text>
<rect x="368.6" y="647" width="2.8" height="2.5"/>
<text transform="matrix(1.087 0 0.001 1.319 378.91 649.7)">6</text>
<text transform="matrix(1 0 0.001 1.319 391.5 649.7)">4</text>
</g>
<g fill="#FFFF00" stroke="#FFFF00">
<rect x="409.1" y="640.45" width="11.4" height="1.6"/>
<text transform="matrix(1.064 0 0.001 1.319 421.15 649.7)">3</text>
<text transform="matrix(1.053 0 0.001 1.319 433.16 649.7)">0</text>
<text transform="matrix(1.099 0 0.001 1.319 444.9 649.7)">7</text>
<rect x="458.6" y="647" width="2.8" height="2.5"/>
<text transform="matrix(1.087 0 0.001 1.319 468.91 649.7)">6</text>
<text transform="matrix(1.064 0 0.001 1.319 481.04 649.7)">8</text>
</g>
<g fill="#FFFF00" stroke="#FFFF00">
<rect x="499.1" y="640.45" width="11.4" height="1.6"/>
<text transform="matrix(1.064 0 0.001 1.319 511.04 649.7)">8</text>
<text transform="matrix(1 0 0.001 1.319 523.5 649.7)">4</text>
<text transform="matrix(1.053 0 0.001 1.319 535.16 649.7)">0</text>
<rect x="548.6" y="647" width="2.8" height="2.5"/>
<path d="M563.9 631.3H566.2V649.5H563.9V634.3Q562.9 635.2 560.9 635.4V634Q562.6 633.8 563.9 631.3Z"/>
<path d="M575.9 631.3H578.2V649.5H575.9V634.3Q574.9 635.2 572.9 635.4V634Q574.6 633.8 575.9 631.3Z"/>
</g>
<g fill="#00FF00" stroke="#00FF00">
<rect x="589.1" y="640.45" width="11.4" height="1.6"/>
<text transform="matrix(1.064 0 0.001 1.319 601.04 649.7)">8</text>
<text transform="matrix(1.053 0 0.001 1.319 613.16 649.7)">5</text>
<text transform="matrix(1 0 0.001 1.319 625.5 649.7)">4</text>
<rect x="638.6" y="647" width="2.8" height="2.5"/>
<text transform="matrix(1.064 0 0.001 1.319 649.04 649.7)">8</text>
<text transform="matrix(1.099 0 0.001 1.319 660.9 649.7)">7</text>
</g>
<g fill="#FFFF00" stroke="#FFFF00">
<rect x="687.1" y="640.45" width="11.4" height="1.6"/>
<text transform="matrix(1.099 0 0.001 1.319 698.9 649.7)">2</text>
<text transform="matrix(1 0 0.001 1.319 711.5 649.7)">4</text>
<text transform="matrix(1.075 0 0.001 1.319 723.03 649.7)">9</text>
<text transform="matrix(1.053 0 0.001 1.319 735.16 649.7)">0</text>
<rect x="748.6" y="647" width="2.8" height="2.5"/>
<text transform="matrix(1 0 0.001 1.319 759.5 649.7)">4</text>
<text transform="matrix(1 0 0.001 1.319 771.5 649.7)">4</text>
</g>
<g fill="#00FF00" stroke="#00FF00">
<rect x="17.8" y="653.9" width="1.55" height="20.9"/>
<rect x="17.8" y="653.9" width="6" height="1.35"/>
<rect x="17.8" y="673.45" width="6" height="1.35"/>
<text transform="matrix(0.758 0 0.001 1.319 25.92 672.7)">A</text>
<text transform="matrix(0.877 0 0.001 1.319 36.68 672.7)">U</text>
<text transform="matrix(0.84 0 0.001 1.319 48.66 672.7)">D</text>
<text transform="matrix(0.787 0 0.001 1.319 61.21 672.7)">C</text>
<rect x="73.95" y="654.3" width="2.45" height="18.4"/>
<rect x="81.75" y="654.3" width="2.45" height="18.4"/>
<rect x="74.05" y="661.65" width="10.1" height="1.95"/>
<rect x="85.95" y="654.3" width="2.45" height="18.4"/>
<rect x="86" y="654.3" width="10" height="1.95"/>
<rect x="86" y="661.75" width="8.2" height="1.95"/>
<rect x="102.75" y="653.9" width="1.55" height="20.9"/>
<rect x="98.3" y="653.9" width="6" height="1.35"/>
<rect x="98.3" y="673.45" width="6" height="1.35"/>
</g>
<g fill="#00FF00" stroke="#00FF00">
<rect x="139.1" y="663.45" width="11.4" height="1.6"/>
<path d="M155.9 654.3H158.2V672.5H155.9V657.3Q154.9 658.2 152.9 658.4V657Q154.6 656.8 155.9 654.3Z"/>
<text transform="matrix(1.064 0 0.001 1.319 163.15 672.7)">3</text>
<text transform="matrix(1.053 0 0.001 1.319 175.16 672.7)">5</text>
<rect x="188.6" y="670" width="2.8" height="2.5"/>
<text transform="matrix(1.064 0 0.001 1.319 199.15 672.7)">3</text>
<text transform="matrix(1.075 0 0.001 1.319 211.03 672.7)">9</text>
</g>
<g fill="#FFFF00" stroke="#FFFF00">
<rect x="229.1" y="663.45" width="11.4" height="1.6"/>
<text transform="matrix(1.099 0 0.001 1.319 240.9 672.7)">2</text>
<text transform="matrix(1.064 0 0.001 1.319 253.15 672.7)">3</text>
<text transform="matrix(1.064 0 0.001 1.319 265.15 672.7)">3</text>
<rect x="278.6" y="670" width="2.8" height="2.5"/>
<text transform="matrix(1.053 0 0.001 1.319 289.16 672.7)">0</text>
<text transform="matrix(1.075 0 0.001 1.319 301.03 672.7)">9</text>
</g>
<g fill="#FFA500" stroke="#FFA500">
<rect x="319.1" y="663.45" width="11.4" height="1.6"/>
<text transform="matrix(1.064 0 0.001 1.319 331.15 672.7)">3</text>
<text transform="matrix(1.053 0 0.001 1.319 343.16 672.7)">0</text>
<text transform="matrix(1.075 0 0.001 1.319 355.03 672.7)">9</text>
<rect x="368.6" y="670" width="2.8" height="2.5"/>
<text transform="matrix(1 0 0.001 1.319 379.5 672.7)">4</text>
<text transform="matrix(1.053 0 0.001 1.319 391.16 672.7)">0</text>
</g>
<g fill="#FFA500" stroke="#FFA500">
<rect x="409.1" y="663.45" width="11.4" height="1.6"/>
<text transform="matrix(1 0 0.001 1.319 421.5 672.7)">4</text>
<text transform="matrix(1.064 0 0.001 1.319 433.15 672.7)">3</text>
<text transform="matrix(1.087 0 0.001 1.319 444.91 672.7)">6</text>
<rect x="458.6" y="670" width="2.8" height="2.5"/>
<text transform="matrix(1.053 0 0.001 1.319 469.16 672.7)">5</text>
<path d="M485.9 654.3H488.2V672.5H485.9V657.3Q484.9 658.2 482.9 658.4V657Q484.6 656.8 485.9 654.3Z"/>
</g>
<g fill="#FF0000" stroke="#FF0000">
<rect x="499.1" y="663.45" width="11.4" height="1.6"/>
<text transform="matrix(1.075 0 0.001 1.319 511.03 672.7)">9</text>
<text transform="matrix(1.053 0 0.001 1.319 523.16 672.7)">5</text>
<text transform="matrix(1.053 0 0.001 1.319 535.16 672.7)">0</text>
<rect x="548.6" y="670" width="2.8" height="2.5"/>
<text transform="matrix(1.064 0 0.001 1.319 559.04 672.7)">8</text>
<text transform="matrix(1.075 0 0.001 1.319 571.03 672.7)">9</text>
</g>
<g fill="#FFA500" stroke="#FFA500">
<rect x="589.1" y="663.45" width="11.4" height="1.6"/>
<text transform="matrix(1.075 0 0.001 1.319 601.03 672.7)">9</text>
<text transform="matrix(1.099 0 0.001 1.319 612.9 672.7)">2</text>
<text transform="matrix(1.099 0 0.001 1.319 624.9 672.7)">7</text>
<rect x="638.6" y="670" width="2.8" height="2.5"/>
<text transform="matrix(1.053 0 0.001 1.319 649.16 672.7)">0</text>
<text transform="matrix(1.075 0 0.001 1.319 661.03 672.7)">9</text>
</g>
<g fill="#FFA500" stroke="#FFA500">
<rect x="687.1" y="663.45" width="11.4" height="1.6"/>
<text transform="matrix(1.099 0 0.001 1.319 698.9 672.7)">2</text>
<text transform="matrix(1.075 0 0.001 1.319 711.03 672.7)">9</text>
<text transform="matrix(1.075 0 0.001 1.319 723.03 672.7)">9</text>
<text transform="matrix(1.099 0 0.001 1.319 734.9 672.7)">2</text>
<rect x="748.6" y="670" width="2.8" height="2.5"/>
<text transform="matrix(1.064 0 0.001 1.319 759.15 672.7)">3</text>
<text transform="matrix(1.099 0 0.001 1.319 770.9 672.7)">7</text>
</g>
<g fill="#00FF00" stroke="#00FF00">
<rect x="17.8" y="676.9" width="1.55" height="20.9"/>
<rect x="17.8" y="676.9" width="6" height="1.35"/>
<rect x="17.8" y="696.45" width="6" height="1.35"/>
<text transform="matrix(0.763 0 0.001 1.319 25.24 695.7)">G</text>
<text transform="matrix(0.935 0 0.001 1.319 36.5 695.7)">B</text>
<text transform="matrix(0.935 0 0.001 1.319 48.5 695.7)">P</text>
<text transform="matrix(0.787 0 0.001 1.319 61.21 695.7)">C</text>
<rect x="73.95" y="677.3" width="2.45" height="18.4"/>
<rect x="81.75" y="677.3" width="2.45" height="18.4"/>
<rect x="74.05" y="684.65" width="10.1" height="1.95"/>
<rect x="85.95" y="677.3" width="2.45" height="18.4"/>
<rect x="86" y="677.3" width="10" height="1.95"/>
<rect x="86" y="684.75" width="8.2" height="1.95"/>
<rect x="102.75" y="676.9" width="1.55" height="20.9"/>
<rect x="98.3" y="676.9" width="6" height="1.35"/>
<rect x="98.3" y="696.45" width="6" height="1.35"/>
</g>
<g fill="#FF0000" stroke="#FF0000">
<rect x="139.1" y="686.45" width="11.4" height="1.6"/>
<path d="M155.9 677.3H158.2V695.5H155.9V680.3Q154.9 681.2 152.9 681.4V680Q154.6 679.8 155.9 677.3Z"/>
<text transform="matrix(1.064 0 0.001 1.319 163.04 695.7)">8</text>
<text transform="matrix(1 0 0.001 1.319 175.5 695.7)">4</text>
<rect x="188.6" y="693" width="2.8" height="2.5"/>
<text transform="matrix(1.053 0 0.001 1.319 199.16 695.7)">5</text>
<text transform="matrix(1.075 0 0.001 1.319 211.03 695.7)">9</text>
</g>
<g fill="#FF0000" stroke="#FF0000">
<rect x="229.1" y="686.45" width="11.4" height="1.6"/>
<text transform="matrix(1.099 0 0.001 1.319 240.9 695.7)">2</text>
<text transform="matrix(1.087 0 0.001 1.319 252.91 695.7)">6</text>
<text transform="matrix(1.099 0 0.001 1.319 264.9 695.7)">2</text>
<rect x="278.6" y="693" width="2.8" height="2.5"/>
<text transform="matrix(1 0 0.001 1.319 289.5 695.7)">4</text>
<text transform="matrix(1.053 0 0.001 1.319 301.16 695.7)">0</text>
</g>
<g fill="#FF0000" stroke="#FF0000">
<rect x="319.1" y="686.45" width="11.4" height="1.6"/>
<text transform="matrix(1.064 0 0.001 1.319 331.15 695.7)">3</text>
<text transform="matrix(1.064 0 0.001 1.319 343.15 695.7)">3</text>
<text transform="matrix(1.099 0 0.001 1.319 354.9 695.7)">7</text>
<rect x="368.6" y="693" width="2.8" height="2.5"/>
<text transform="matrix(1.087 0 0.001 1.319 378.91 695.7)">6</text>
<text transform="matrix(1.053 0 0.001 1.319 391.16 695.7)">0</text>
</g>
<g fill="#FF0000" stroke="#FF0000">
<rect x="409.1" y="686.45" width="11.4" height="1.6"/>
<text transform="matrix(1 0 0.001 1.319 421.5 695.7)">4</text>
<text transform="matrix(1.064 0 0.001 1.319 433.15 695.7)">3</text>
<text transform="matrix(1.099 0 0.001 1.319 444.9 695.7)">7</text>
<rect x="458.6" y="693" width="2.8" height="2.5"/>
<text transform="matrix(1.064 0 0.001 1.319 469.15 695.7)">3</text>
<path d="M485.9 677.3H488.2V695.5H485.9V680.3Q484.9 681.2 482.9 681.4V680Q484.6 679.8 485.9 677.3Z"/>
</g>
<g fill="#FFA500" stroke="#FFA500">
<rect x="499.1" y="686.45" width="11.4" height="1.6"/>
<text transform="matrix(1.064 0 0.001 1.319 511.04 695.7)">8</text>
<text transform="matrix(1 0 0.001 1.319 523.5 695.7)">4</text>
<text transform="matrix(1.053 0 0.001 1.319 535.16 695.7)">0</text>
<rect x="548.6" y="693" width="2.8" height="2.5"/>
<text transform="matrix(1.099 0 0.001 1.319 558.9 695.7)">2</text>
<text transform="matrix(1.075 0 0.001 1.319 571.03 695.7)">9</text>
</g>
<g fill="#FF0000" stroke="#FF0000">
<rect x="577.1" y="686.45" width="11.4" height="1.6"/>
<path d="M593.9 677.3H596.2V695.5H593.9V680.3Q592.9 681.2 590.9 681.4V680Q592.6 679.8 593.9 677.3Z"/>
<text transform="matrix(1.064 0 0.001 1.319 601.15 695.7)">3</text>
<text transform="matrix(1.099 0 0.001 1.319 612.9 695.7)">7</text>
<text transform="matrix(1.053 0 0.001 1.319 625.16 695.7)">0</text>
<rect x="638.6" y="693" width="2.8" height="2.5"/>
<text transform="matrix(1.064 0 0.001 1.319 649.04 695.7)">8</text>
<path d="M665.9 677.3H668.2V695.5H665.9V680.3Q664.9 681.2 662.9 681.4V680Q664.6 679.8 665.9 677.3Z"/>
</g>
<g fill="#FF0000" stroke="#FF0000">
<rect x="687.1" y="686.45" width="11.4" height="1.6"/>
<text transform="matrix(1.064 0 0.001 1.319 699.15 695.7)">3</text>
<text transform="matrix(1 0 0.001 1.319 711.5 695.7)">4</text>
<text transform="matrix(1.064 0 0.001 1.319 723.15 695.7)">3</text>
<text transform="matrix(1.064 0 0.001 1.319 735.15 695.7)">3</text>
<rect x="748.6" y="693" width="2.8" height="2.5"/>
<text transform="matrix(1.053 0 0.001 1.319 759.16 695.7)">0</text>
<text transform="matrix(1.053 0 0.001 1.319 771.16 695.7)">0</text>
</g>
</g>
<g fill="#fff" class="ax">
<rect x="2" y="2" width="827" height="1"/>
<rect x="2" y="2" width="1" height="772"/>
<rect x="2" y="773" width="827" height="1"/>
<rect x="828" y="2" width="1" height="772"/>
<rect x="827" y="0" width="1" height="3"/>
<rect x="829" y="0" width="1" height="3"/>
<rect x="829" y="23" width="2" height="1"/>
<text transform="matrix(1.025 0 0 1 834.9 28.8)">482.03468</text>
<rect x="829" y="88" width="2" height="1"/>
<text transform="matrix(1.025 0 0 1 834.9 93.8)">473.65598</text>
<rect x="829" y="153" width="2" height="1"/>
<text transform="matrix(1.025 0 0 1 834.9 158.8)">465.40423</text>
<rect x="829" y="218" width="2" height="1"/>
<text transform="matrix(1.025 0 0 1 834.9 223.8)">457.15248</text>
<rect x="829" y="283" width="2" height="1"/>
<text transform="matrix(1.025 0 0 1 834.9 288.8)">448.90073</text>
<rect x="829" y="348" width="2" height="1"/>
<text transform="matrix(1.025 0 0 1 834.9 353.8)">440.64898</text>
<rect x="829" y="413" width="2" height="1"/>
<text transform="matrix(1.025 0 0 1 834.9 418.8)">432.27028</text>
<rect x="829" y="478" width="2" height="1"/>
<text transform="matrix(1.025 0 0 1 834.9 483.8)">424.01853</text>
<rect x="829" y="543" width="2" height="1"/>
<text transform="matrix(1.025 0 0 1 834.9 548.8)">415.76678</text>
<rect x="829" y="608" width="2" height="1"/>
<text transform="matrix(1.025 0 0 1 834.9 613.8)">407.51503</text>
<rect x="829" y="673" width="2" height="1"/>
<text transform="matrix(1.025 0 0 1 834.9 678.8)">399.26328</text>
<rect x="829" y="738" width="2" height="1"/>
<text transform="matrix(1.025 0 0 1 834.9 743.8)">391.01153</text>
<rect x="3" y="774" width="1" height="3"/>
<text transform="matrix(1.022 0 0 1 1.8 791)">27 Oct 2025</text>
<rect x="131" y="774" width="1" height="3"/>
<text transform="matrix(1.022 0 0 1 129.8 791)">30 Oct 10:00</text>
<rect x="259" y="774" width="1" height="3"/>
<text transform="matrix(1.022 0 0 1 257.8 791)">4 Nov 02:00</text>
<rect x="387" y="774" width="1" height="3"/>
<text transform="matrix(1.022 0 0 1 385.8 791)">6 Nov 18:00</text>
<rect x="515" y="774" width="1" height="3"/>
<text transform="matrix(1.022 0 0 1 513.8 791)">11 Nov 10:00</text>
<rect x="643" y="774" width="1" height="3"/>
<text transform="matrix(1.022 0 0 1 641.8 791)">14 Nov 02:00</text>
<text x="24" y="18.8" textLength="72" lengthAdjust="spacingAndGlyphs">USDCHF,H1</text>
</g>
</svg>
</body></html>
